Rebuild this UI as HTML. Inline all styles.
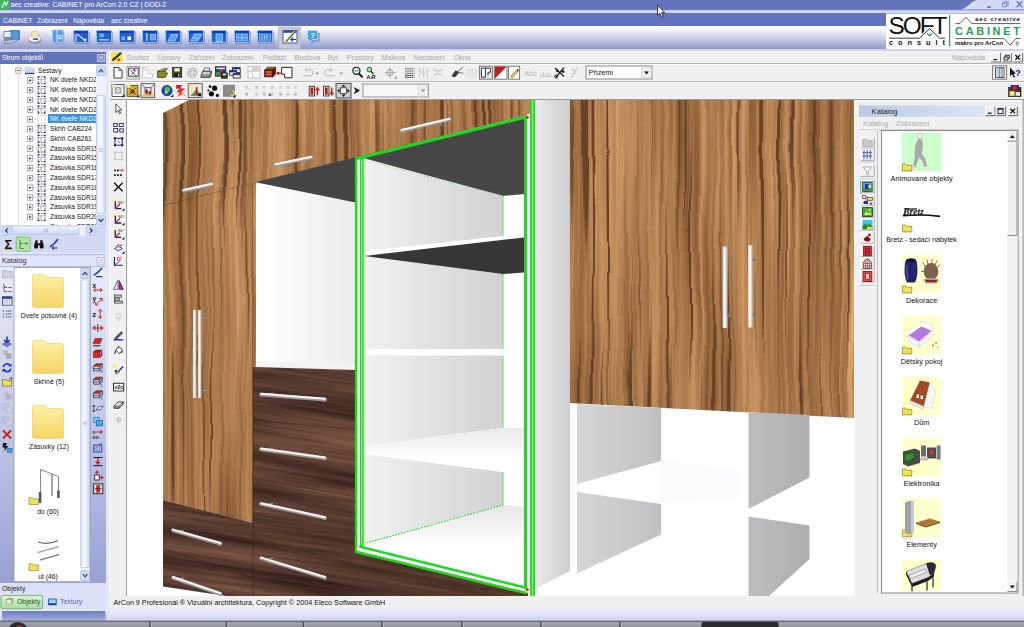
<!DOCTYPE html>
<html lang="cs">
<head>
<meta charset="utf-8">
<title>aec creative: CABINET pro ArCon 2.0 CZ | DOD-2</title>
<style>
html,body{margin:0;padding:0;}
body{width:1024px;height:627px;overflow:hidden;position:relative;background:#f0f0f0;
 font-family:"Liberation Sans",sans-serif;font-size:7.1px;color:#111;}
.a{position:absolute;}
.t{position:absolute;white-space:nowrap;line-height:10px;}
svg{position:absolute;left:0;top:0;overflow:visible;}
#titlebar{left:0;top:0;width:1024px;height:10px;background:#6374bb;}
#stripe1{left:0;top:10px;width:1024px;height:3px;background:#d5daf0;}
#menubar{left:0;top:13px;width:1024px;height:13px;background:#6374bb;}
#bigtool{left:0;top:26px;width:1024px;height:23px;background:linear-gradient(#ffffff 0%,#f4f5fb 15%,#c9cde8 55%,#8f98cd 100%);}
#stripe2{left:0;top:49px;width:1024px;height:3px;background:#cfd5ee;}
#leftpane{left:0;top:52px;width:107px;height:557px;background:#d3d9f2;}
#treehead{left:0;top:52px;width:106px;height:12px;background:#6374bb;}
#tree{left:1px;top:64px;width:95px;height:161px;background:#fff;overflow:hidden;}
.row{position:absolute;left:0;height:10px;white-space:nowrap;line-height:10px;}
#mainwin{left:109px;top:51px;width:915px;height:558px;background:#f0f0f0;}
.hl{position:absolute;background:#a0a0a0;height:1px;}
.menu2 span{position:absolute;top:0;color:#a9a9a9;font-size:9.3px;line-height:12px;}
#status{left:109px;top:596px;width:915px;height:13px;background:#f0f0f0;}
#bottombar{left:0;top:609px;width:1024px;height:12px;background:linear-gradient(#e9ecf8,#cfd5ee);}
#taskbar{left:0;top:621px;width:1024px;height:6px;background:#5a5e66;}
</style>
</head>
<body>
<!-- ===== application title bar ===== -->
<div id="titlebar" class="a"></div>
<div id="stripe1" class="a"></div>
<div id="menubar" class="a"></div>
<div id="bigtool" class="a"></div>
<div id="stripe2" class="a"></div>
<div class="t" style="left:10.5px;top:0;color:#fff;font-size:7px;line-height:9.6px;">aec creative: CABINET pro ArCon 2.0 CZ | DOD-2</div>
<div id="appmenu" class="a" style="left:0;top:14.8px;height:12px;color:#fff;font-size:6.8px;line-height:12px;white-space:nowrap;">
<span class="a" style="left:3px">CABINET</span><span class="a" style="left:37px">Zobrazení</span><span class="a" style="left:73px">Nápověda</span><span class="a" style="left:111px">aec creative</span></div>

<!-- ===== left pane ===== -->
<div id="leftpane" class="a"></div>
<div id="treehead" class="a"></div>
<div class="t" style="left:2px;top:53px;color:#fff;font-size:6.7px;">Strom objektů</div>

<!-- ===== main window ===== -->
<div id="mainwin" class="a"></div>
<div id="bottombar" class="a"></div>
<div id="taskbar" class="a"></div>

<!-- SCENE -->
<svg id="scene" style="left:127px;top:100px" width="728" height="496" viewBox="127 100 728 496">
<defs>
 <filter id="fwL" x="97" y="70" width="788" height="556" filterUnits="userSpaceOnUse" color-interpolation-filters="sRGB">
  <feTurbulence type="fractalNoise" baseFrequency="0.03 0.0025" numOctaves="2" seed="7" result="a"/>
  <feTurbulence type="fractalNoise" baseFrequency="0.2 0.004" numOctaves="2" seed="12" result="b"/>
  <feComposite in="a" in2="b" operator="arithmetic" k1="0" k2="0.5" k3="0.5" k4="0" result="c"/>
  <feColorMatrix in="c" type="matrix" values="0.66 0 0 0 0.335  0.58 0 0 0 0.185  0.46 0 0 0 0.07  0 0 0 0 1" result="base"/>
  <feTurbulence type="fractalNoise" baseFrequency="0.26 0.0035" numOctaves="1" seed="31" result="l"/>
  <feColorMatrix in="l" type="matrix" values="0 0 0 0 0.40  0 0 0 0 0.26  0 0 0 0 0.15  -9 0 0 0 3.75" result="lines"/>
  <feMerge result="grain"><feMergeNode in="base"/><feMergeNode in="lines"/></feMerge>
  <feTurbulence type="fractalNoise" baseFrequency="0.009 0.011" numOctaves="2" seed="5" result="w"/>
  <feDisplacementMap in="grain" in2="w" scale="7" xChannelSelector="R" yChannelSelector="G"/>
 </filter>
 <filter id="fwD" x="127" y="300" width="420" height="300" filterUnits="userSpaceOnUse" color-interpolation-filters="sRGB">
  <feTurbulence type="fractalNoise" baseFrequency="0.004 0.06" numOctaves="3" seed="3" result="a"/>
  <feTurbulence type="fractalNoise" baseFrequency="0.01 0.3" numOctaves="2" seed="5" result="b"/>
  <feComposite in="a" in2="b" operator="arithmetic" k1="0" k2="0.65" k3="0.35" k4="0" result="c"/>
  <feColorMatrix in="c" type="matrix" values="0.56 0 0 0 0.062  0.40 0 0 0 0.03  0.33 0 0 0 0.02  0 0 0 0 1"/>
 </filter>
 <linearGradient id="gWall" x1="364" x2="503" y1="0" y2="0" gradientUnits="userSpaceOnUse"><stop offset="0" stop-color="#f1f1f1"/><stop offset="1" stop-color="#d2d2d3"/></linearGradient>
 <linearGradient id="gInt" x1="256" x2="355" y1="0" y2="0" gradientUnits="userSpaceOnUse"><stop offset="0" stop-color="#ffffff"/><stop offset="1" stop-color="#ececec"/></linearGradient>
 <linearGradient id="gStrip" x1="535" x2="570" y1="0" y2="0" gradientUnits="userSpaceOnUse"><stop offset="0" stop-color="#ebebeb"/><stop offset="1" stop-color="#cdcdce"/></linearGradient>
 <linearGradient id="gP1" x1="577" x2="661" y1="0" y2="0" gradientUnits="userSpaceOnUse"><stop offset="0" stop-color="#d6d6d8"/><stop offset="1" stop-color="#c0c0c2"/></linearGradient>
 <linearGradient id="gP3" x1="748" x2="810" y1="0" y2="0" gradientUnits="userSpaceOnUse"><stop offset="0" stop-color="#bdbdbf"/><stop offset="1" stop-color="#aeaeb0"/></linearGradient>
 <linearGradient id="gFloor" x1="0" x2="0" y1="505" y2="590" gradientUnits="userSpaceOnUse"><stop offset="0" stop-color="#e6e6e8"/><stop offset="0.5" stop-color="#ffffff"/></linearGradient>
 <linearGradient id="gSh3" x1="0" x2="0" y1="428" y2="473" gradientUnits="userSpaceOnUse"><stop offset="0" stop-color="#e9e9eb"/><stop offset="0.7" stop-color="#ffffff"/></linearGradient>
 <linearGradient id="gHv" x1="0" x2="1" y1="0" y2="0"><stop offset="0" stop-color="#c8c8c8"/><stop offset="0.4" stop-color="#ffffff"/><stop offset="1" stop-color="#b4b4b4"/></linearGradient>
 <linearGradient id="gHh" x1="0" x2="0" y1="0" y2="1"><stop offset="0" stop-color="#ffffff"/><stop offset="1" stop-color="#a8a8a8"/></linearGradient>
 <clipPath id="cpL"><path d="M163,113 L189,100 L530,100 L530,114 L163,205.5Z M163,205.5 L256,182.5 L256,524 L163,500Z M569,100 L854,100 L854,418 L569,403Z"/></clipPath>
 <clipPath id="cpD"><path d="M253,367 L357,370 L357,551 L528,593 L528,596 L253,596Z M163,500 L253,523 L253,596 L172,596 L163,590Z"/></clipPath>
</defs>
<rect x="127" y="100" width="728" height="496" fill="#fff"/>
<!-- light walnut fronts -->
<g clip-path="url(#cpL)"><rect x="97" y="70" width="788" height="556" filter="url(#fwL)"/></g>
<path d="M163,205.5 L527,115" stroke="#5b3c22" stroke-width="0.8" opacity=".7"/>
<path d="M252.5,184 V523" stroke="#7a522e" stroke-width="1" opacity=".6"/>
<path d="M741,100 V412" stroke="#7a522e" stroke-width="0.8" opacity=".5"/>
<!-- white carcass interior left of selection -->
<polygon points="256,183 355,202 355,370 256,367" fill="url(#gInt)"/>
<polygon points="256,361 355,364 355,370 256,367" fill="#f3f3f4"/>
<polygon points="255.5,182.2 355.5,157.3 355.5,202.5" fill="#454546"/>
<!-- dark walnut drawers -->
<g clip-path="url(#cpD)"><g transform="translate(253,0) skewY(8.5) translate(-253,0)"><rect x="127" y="300" width="420" height="300" filter="url(#fwD)"/></g></g>
<path d="M253,420 L357,430 M253,478 L357,497 M253,537 L357,565 M163,548 L253,578" stroke="#2a1a12" stroke-width="0.7" opacity=".55"/>
<path d="M253,367 V596" stroke="#2a1a12" stroke-width="0.8" opacity=".6"/>
<!-- selected carcass -->
<polygon points="364,159 524,119 524,588 364,546" fill="#fff"/>
<polygon points="363,158 525,117.5 525,194 503,196" fill="#474748"/>
<polygon points="364,160 503,196 503,236 364,251" fill="url(#gWall)"/>
<polygon points="364,256 503,274 503,349 364,349" fill="url(#gWall)"/>
<polygon points="364,355.5 503,355.5 503,428 364,446" fill="url(#gWall)"/>
<polygon points="364,454 503,472 503,504.5 364,542.5" fill="url(#gWall)"/>
<polygon points="364,256 524,237.5 524,272.5 503,274" fill="#373738"/>
<polygon points="364,446 503,428 524,428 524,473 503,472 364,454" fill="url(#gSh3)"/>
<polygon points="364,543 503,505 524,507 524,588 364,546" fill="url(#gFloor)"/>
<path d="M503,196 V236 M503,274 V349 M503,356 V428 M503,472 V505" stroke="#62e862" stroke-width="1"/>
<path d="M366,543 L503,505" stroke="#3ed63e" stroke-width="1.2" stroke-dasharray="2 1"/>
<path d="M366,160.5 L503,196" stroke="#7be87b" stroke-width="0.8" stroke-dasharray="2 1"/>
<!-- green selection frame -->
<g stroke="#1fd81f" fill="none">
 <path d="M356.2,157.5 V551" stroke-width="2.6"/>
 <path d="M361.8,157 V546" stroke-width="4"/>
 <path d="M356,158.8 L527,116.6" stroke-width="3.2"/>
 <path d="M525.5,117 V590" stroke-width="3"/>
 <path d="M532.5,100 V596" stroke-width="5"/>
 <path d="M358,546.2 L527,588" stroke-width="2.6"/>
 <path d="M355,551.5 L527,593.2" stroke-width="2.8"/>
</g>
<path d="M361.8,160 V545" stroke="#8cf58c" stroke-width="1.2"/>
<path d="M532.5,100 V596" stroke="#7df27d" stroke-width="1.5"/>
<path d="M528.5,118 V592" stroke="#fff" stroke-width="2.2"/>
<path d="M358.6,161 V549" stroke="#f4fff4" stroke-width="1.4"/>
<path d="M357,548.8 L527,590.6" stroke="#fff" stroke-width="2"/>
<circle cx="527.3" cy="117.3" r="1.6" fill="#e02a18"/>
<circle cx="527.3" cy="589.5" r="1.6" fill="#e02a18"/>
<!-- side panel right of selection -->
<polygon points="535,100 570,100 570,571 535,589" fill="url(#gStrip)"/>
<!-- open shelving under wall units -->
<polygon points="577,404 661,408 661,461 577,484" fill="url(#gP1)"/>
<polygon points="577,492 661,504 661,534.5 577,573.5" fill="url(#gP1)"/>
<polygon points="748.5,412 809.5,415 809.5,477.5 748.5,509" fill="url(#gP3)"/>
<polygon points="748.5,516.5 809.5,525.5 809.5,559 769,596 748.5,596" fill="url(#gP3)"/>
<polygon points="661,461 740,469 740,500 661,503" fill="#fbfbfe"/>
<!-- handles -->
<g>
 <rect x="722.6" y="246.5" width="4.8" height="81.5" rx="1" fill="url(#gHv)"/>
 <rect x="748" y="245" width="4.6" height="82.5" rx="1" fill="url(#gHv)"/>
 <g fill="#767a80"><circle cx="729" cy="261" r="1.6"/><circle cx="729" cy="315.5" r="1.6"/><circle cx="754" cy="259.5" r="1.6"/><circle cx="754" cy="315" r="1.6"/></g>
 <rect x="193" y="310" width="3.2" height="88" fill="url(#gHv)"/>
 <rect x="198" y="310" width="3.2" height="88" fill="url(#gHv)"/>
 <path d="M201,317.5 H207 M201,390.5 H207" stroke="#8f8f8f" stroke-width="1.6"/>
 <g stroke-linecap="round">
  <g stroke="#8b8b8b" stroke-width="1.6" stroke-linecap="butt">
   <path d="M190,190.6 l1.6,2.4 M206.5,187 l1.6,2.4 M283,164.6 l1.6,2.6 M304.5,160.2 l1.6,2.6 M411,129.8 l2,3 M440.5,123 l2,3"/>
   <path d="M268,394.4 l5,-1.2 M321.5,399 l3.4,2.6 M268,449.6 l5,-1.4 M321.5,457.6 l3.4,2.6 M268,504.6 l5,-1.6 M321.5,517 l3.4,2.6 M268,559.4 l5,-1.8 M321.5,576.6 l3.4,2.6 M179,531.6 l4.4,-1.4 M217.5,542.8 l3,2.6 M179,579.2 l4.4,-1.4 M217.5,592.6 l3,2.6"/>
  </g>
  <g stroke="#9a9a9a" stroke-width="3.6">
   <path d="M183.5,190.8 L212,184.6 M275.5,165 L311.5,157.6 M401.5,130.8 L449.5,119.6"/>
   <path d="M261,394.6 L325,399.6 M261,449.4 L325,458.2 M261,504 L325,518 M261,558.4 L325,577.8 M173,530.4 L220.5,543.8 M173,577.8 L220.5,594"/>
  </g>
  <g stroke="#f6f6f6" stroke-width="2">
   <path d="M183.5,190 L212,183.8 M275.5,164.2 L311.5,156.8 M401.5,130 L449.5,118.8"/>
   <path d="M261,393.8 L325,398.8 M261,448.6 L325,457.4 M261,503.2 L325,517.2 M261,557.6 L325,577 M173,529.6 L220.5,543 M173,577 L220.5,593.2"/>
  </g>
 </g>
</g>
</svg>
<!-- /SCENE -->
<!-- RIGHTCAT -->
<svg id="mainchrome" width="1024" height="627" viewBox="0 0 1024 627"><rect x="106" y="51" width="3" height="558" fill="#e3e7f6"/>
<rect x="109" y="63.2" width="915" height=".9" fill="#a6a6a6"/><rect x="109" y="64.1" width="915" height=".8" fill="#fff"/>
<rect x="109" y="81" width="915" height=".9" fill="#a6a6a6"/><rect x="109" y="81.9" width="915" height=".8" fill="#fff"/>
<rect x="109" y="99" width="915" height="1" fill="#9a9a9a"/>
<rect x="126" y="100" width="1" height="496" fill="#9a9a9a"/>
<rect x="109" y="51" width=".8" height="558" fill="#fafafa"/>
<rect x="111" y="52" width="11.5" height="10.4" fill="#f6e93a"/><path d="M112.5,60.5 C115,58 118,56 121,52.8" stroke="#1c2a8a" stroke-width="2" fill="none"/><path d="M113,57.5 l2.2,1.2 M118.8,58.4 l1,2.2 l-2.4,-.6z" stroke="#d22" stroke-width=".9" fill="#d22"/>
<text x="126.5" y="60.4" font-family="Liberation Sans,sans-serif" font-size="7.3" fill="#a9a9a9" textLength="22.9" lengthAdjust="spacingAndGlyphs">Soubor</text>
<text x="157.8" y="60.4" font-family="Liberation Sans,sans-serif" font-size="7.3" fill="#a9a9a9" textLength="22.7" lengthAdjust="spacingAndGlyphs">Úpravy</text>
<text x="189" y="60.4" font-family="Liberation Sans,sans-serif" font-size="7.3" fill="#a9a9a9" textLength="25.6" lengthAdjust="spacingAndGlyphs">Zařízení</text>
<text x="222" y="60.4" font-family="Liberation Sans,sans-serif" font-size="7.3" fill="#a9a9a9" textLength="32" lengthAdjust="spacingAndGlyphs">Zobrazení</text>
<text x="262.7" y="60.4" font-family="Liberation Sans,sans-serif" font-size="7.3" fill="#a9a9a9" textLength="23.5" lengthAdjust="spacingAndGlyphs">Podlaží</text>
<text x="294.5" y="60.4" font-family="Liberation Sans,sans-serif" font-size="7.3" fill="#a9a9a9" textLength="26" lengthAdjust="spacingAndGlyphs">Budova</text>
<text x="327.5" y="60.4" font-family="Liberation Sans,sans-serif" font-size="7.3" fill="#a9a9a9" textLength="10.5" lengthAdjust="spacingAndGlyphs">Byt</text>
<text x="346.5" y="60.4" font-family="Liberation Sans,sans-serif" font-size="7.3" fill="#a9a9a9" textLength="27.5" lengthAdjust="spacingAndGlyphs">Prostory</text>
<text x="381.5" y="60.4" font-family="Liberation Sans,sans-serif" font-size="7.3" fill="#a9a9a9" textLength="24" lengthAdjust="spacingAndGlyphs">Makros</text>
<text x="413.5" y="60.4" font-family="Liberation Sans,sans-serif" font-size="7.3" fill="#a9a9a9" textLength="32" lengthAdjust="spacingAndGlyphs">Nastavení</text>
<text x="454" y="60.4" font-family="Liberation Sans,sans-serif" font-size="7.3" fill="#a9a9a9" textLength="16.5" lengthAdjust="spacingAndGlyphs">Okna</text>
<text x="952" y="60.4" font-family="Liberation Sans,sans-serif" font-size="7.3" fill="#a9a9a9" textLength="33" lengthAdjust="spacingAndGlyphs">Nápověda</text>
<rect x="991" y="53" width="9.6" height="9" fill="#f0f0f0" stroke="#fff" stroke-width=".8"/><path d="M991,62 h9.6 v-9" stroke="#555" stroke-width=".9" fill="none"/>
<path d="M993.4,59.6 h3.6" stroke="#111" stroke-width="1.2"/>
<rect x="1002" y="53" width="9.6" height="9" fill="#f0f0f0" stroke="#fff" stroke-width=".8"/><path d="M1002,62 h9.6 v-9" stroke="#555" stroke-width=".9" fill="none"/>
<path d="M1004,57 h4 v3 h-4z M1005.4,56.6 v-1.4 h4 v3 h-1.2" stroke="#111" stroke-width=".9" fill="none"/>
<rect x="1013" y="53" width="9.6" height="9" fill="#f0f0f0" stroke="#fff" stroke-width=".8"/><path d="M1013,62 h9.6 v-9" stroke="#555" stroke-width=".9" fill="none"/>
<path d="M1015.4,55 l4.6,4.8 M1020,55 l-4.6,4.8" stroke="#111" stroke-width="1.3"/>
<g transform="translate(113.5,67)"><path d="M.5,.5 h5 l3,3 v7.5 h-8z" fill="#fff" stroke="#222" stroke-width=".9"/><path d="M5.5,.5 v3 h3" fill="none" stroke="#222" stroke-width=".7"/></g>
<g transform="translate(127,66.4)"><rect x="0" y="0" width="12.6" height="12.6" fill="#e4e4e4" stroke="#8a8a8a" stroke-width=".8"/><rect x="1.6" y="1.8" width="9.6" height="8" fill="#fff" stroke="#333" stroke-width=".8"/><path d="M2.5,3 l7.5,7.5 M4,9 l5,-5" stroke="#333" stroke-width=".8"/><rect x="5.6" y="2.2" width="3" height="2.4" fill="#c94fc9"/></g>
<g transform="translate(142,67)"><path d="M.5,.5 h3.5 v3 h3 v3.4 h3.5 v4 h-10z" fill="#fafafa" stroke="#c4c4c4" stroke-width=".9"/><path d="M1,1 l5,6.5" stroke="#c8c8c8" stroke-width=".7"/></g>
<g transform="translate(157,67.5)"><path d="M.5,3 h3 l1,-1.4 h4 v1.8 h-4" fill="#d8d06a" stroke="#4a4a10" stroke-width=".7"/><path d="M.5,10 v-6 h8.5 v1.6 h1.6 l-2.4,4.4z" fill="#8a8a2a" stroke="#33330a" stroke-width=".7"/><path d="M7,1.4 q2,-1.6 3,.4 m0,0 l.6,-1.4 m-.6,1.4 l-1.4,-.2" stroke="#222" stroke-width=".6" fill="none"/></g>
<g transform="translate(172.5,67.5)"><rect x="0" y="0" width="9.2" height="9.6" fill="#4a4a1a" stroke="#1a1a08" stroke-width=".7"/><rect x="1.8" y=".6" width="5.4" height="3.4" fill="#e8e8e8"/><rect x="2.2" y="6" width="4.8" height="3.4" fill="#111"/><rect x="5.4" y="6.6" width="1.2" height="2.2" fill="#ddd"/></g>
<text x="186.6" y="76.4" font-family="Liberation Sans,sans-serif" font-size="11.5" fill="#9d9d9d">@</text>
<g transform="translate(200.6,67.4)"><path d="M2.4,3.8 l1.6,-3.2 h5.4 l-1,3.2z" fill="#fff" stroke="#333" stroke-width=".7"/><path d="M.4,7.8 l1.8,-4 h8.6 l-1.6,4z" fill="#c9c9c9" stroke="#222" stroke-width=".8"/><path d="M.4,7.8 v2.2 h8.8 v-2.2 M9.2,10 l1.6,-3.8 v-2.4" fill="#999" stroke="#222" stroke-width=".8"/></g>
<g transform="translate(215.4,66.8)"><rect x="0" y="0" width="10.4" height="9.4" fill="#1f2fa8" stroke="#111" stroke-width=".7"/><rect x=".6" y="5" width="5" height="4" fill="#2f9a3a"/><rect x="4.6" y="1" width="2.6" height="6.6" fill="#d22"/><rect x="1" y=".8" width="8.6" height="1.6" fill="#e8e8ff"/><rect x="6" y="6" width="6" height="5.6" fill="#3a3a1a" stroke="#111" stroke-width=".5"/><rect x="7.4" y="6.6" width="3" height="2" fill="#e8e8e8"/></g>
<g transform="translate(229.6,67.6)"><rect x="3" y="0" width="7.6" height="5" fill="#fff" stroke="#111" stroke-width=".8"/><rect x="3.2" y=".2" width="7.2" height="1.6" fill="#1f2fa8"/><rect x="0" y="3" width="7" height="4.6" fill="#fff" stroke="#111" stroke-width=".8"/><rect x=".2" y="3.2" width="6.6" height="1.6" fill="#1f2fa8"/><rect x="3.6" y="6" width="7" height="4.4" fill="#fff" stroke="#111" stroke-width=".8"/><rect x="3.8" y="6.2" width="6.6" height="1.4" fill="#1f2fa8"/></g>
<g transform="translate(248,66.6)"><rect x="0" y="0" width="12" height="11.6" fill="#fbfbfb" stroke="#bdbdbd" stroke-width=".9"/><path d="M0,4.6 h12 M4.6,0 v11.6" stroke="#c4c4c4" stroke-width=".9"/><rect x="5" y=".6" width="6.4" height="3.6" fill="#cfcfcf"/></g>
<g transform="translate(264,66.6)"><path d="M.6,3.4 l3,-2.8 h8 l-2.6,2.8z" fill="#8a6a1a" stroke="#2a1a08" stroke-width=".6"/><path d="M.6,3.4 h8.4 v6.8 h-8.4z" fill="#a01818" stroke="#2a0808" stroke-width=".7"/><path d="M9,3.4 l2.6,-2.8 v6.6 l-2.6,3z" fill="#6a0f0f" stroke="#2a0808" stroke-width=".6"/><path d="M2,5.4 h5.6 M2,7.8 h5.6" stroke="#e8c83a" stroke-width=".9"/></g>
<circle cx="278.2" cy="73.2" r="1.5" fill="#d61a1a"/><path d="M276.6,73.2 h4.4" stroke="#d61a1a" stroke-width="1"/>
<g transform="translate(281,66.8)"><path d="M.6,.6 h10.4 v10.4 h-7.4 v-3.6 h-3z" fill="#fff" stroke="#111" stroke-width=".9"/></g>
<path d="M303,75.8 h7.2 a3,3 0 0 0 0,-6 h-4.6 m1.8,-1.8 l-2.2,1.8 l2.2,1.8" stroke="#b9b9b9" stroke-width="1" fill="none"/><path d="M315.4,72.4 h3.6 l-1.8,2.2z" fill="#8a8a8a"/>
<path d="M334.6,75.8 h-7.2 a3,3 0 0 1 0,-6 h4.6 m-1.8,-1.8 l2.2,1.8 l-2.2,1.8" stroke="#b9b9b9" stroke-width="1" fill="none"/><path d="M339.4,72.4 h3.6 l-1.8,2.2z" fill="#8a8a8a"/>
<circle cx="356.4" cy="70.8" r="3.6" fill="#d8f0d8" stroke="#111" stroke-width="1.1"/><path d="M354.6,70.8 h3.6" stroke="#2a8a2a" stroke-width=".9"/><path d="M359,73.6 l3.6,3.8" stroke="#111" stroke-width="2"/>
<circle cx="369.4" cy="69.6" r="2.4" fill="#8ee08e" stroke="#1a5a1a" stroke-width=".9"/><path d="M371,71.4 l2.4,2.4" stroke="#111" stroke-width="1.3"/><text x="366.4" y="79.4" font-family="Liberation Sans,sans-serif" font-size="5.2" font-weight="bold" fill="#111">A›R</text>
<circle cx="390" cy="72.6" r="3" fill="none" stroke="#9a9a9a" stroke-width=".9"/><path d="M384.4,72.6 h11.2 M390,67 v11.2" stroke="#9a9a9a" stroke-width=".8"/><path d="M396.6,78.4 v-2.6 l-2.6,2.6z" fill="#7a7a7a"/>
<path d="M405,68.8 h9.4 M405,71 h9.4 M405,73.2 h9.4 M405,75.4 h9.4 M405,77.4 h9.4" stroke="#4a4a4a" stroke-width="1.1" stroke-dasharray="1.6 .6"/>
<path d="M419.4,67.6 v10.4 M427.4,67.6 v10.4 M419.4,70 l4,4.4 l4,-4.4 M423.4,68 v9" stroke="#c6c6c6" stroke-width=".9" fill="none"/>
<path d="M433,68 l10,9 M433,77 l10,-9 M434,70.6 h8 M434,74.6 h8" stroke="#bdbdbd" stroke-width="1" stroke-dasharray="1.6 .8" fill="none"/>
<path d="M451.4,76 l4,-5.6 l4.4,1.6 l-5,5.4z" fill="#3a3a3a"/><path d="M458,71 l5,-3.6 M458,72.4 l5.4,.8" stroke="#555" stroke-width=".8"/>
<path d="M466.4,69 h10.6 M466.4,71 h10.6 M466.4,73 h10.6 M466.4,75 h10.6 M466.4,77 h10.6" stroke="#c9c9c9" stroke-width=".9" stroke-dasharray=".8 .6"/>
<g transform="translate(479.4,66.2)"><rect x="0" y="0" width="13" height="13" fill="#e2e2e2" stroke="#6a6a6a" stroke-width=".9"/><path d="M2,2 h4 v9 h-4z M6,2 h5 v4 h-2.4 v3" fill="#fff" stroke="#222" stroke-width=".9"/></g>
<g transform="translate(494.4,66.2)"><rect x="0" y="0" width="12.6" height="13" fill="#fff" stroke="#6a6a6a" stroke-width=".9"/><path d="M.6,12.4 v-11.8 h11.4z" fill="#c41a1a"/><path d="M3,12 l9,-9" stroke="#fff" stroke-width="1"/></g>
<g transform="translate(508.6,66.2)"><rect x="0" y="0" width="11" height="13" fill="#fff" stroke="#6a6a6a" stroke-width=".9"/><path d="M2,10.4 l5.6,-6.2 l1.6,1.4 l-5.6,6.2z" fill="#e8c83a" stroke="#5a4a10" stroke-width=".5"/><path d="M7.6,4.2 l1.4,-1.6 l1.6,1.4 l-1.4,1.6z" fill="#d22"/></g>
<text x="524.6" y="76" font-family="Liberation Sans,sans-serif" font-size="7" fill="#b4b4b4">Abc</text>
<path d="M540,76.4 h11 M541,76.4 v-3 M543.4,76.4 v-4.4 M546,76.4 v-3 M548.4,76.4 v-4.4 M550.6,76.4 v-3" stroke="#c2c2c2" stroke-width=".8"/>
<path d="M555,68 l9,8.6 M564,67.6 l-8,9.6" stroke="#111" stroke-width="1.3"/><circle cx="556.2" cy="76.6" r="1.5" fill="none" stroke="#111" stroke-width=".9"/><circle cx="563" cy="71.6" r="1.3" fill="#111"/><circle cx="557.4" cy="71" r="1.2" fill="#111"/>
<path d="M577.4,67.4 l-6,10.6 M572,68 l3,6" stroke="#b9b9b9" stroke-width="1"/>
<rect x="586" y="66" width="66" height="13" fill="#fff" stroke="#7f7f7f" stroke-width=".9"/><rect x="641.6" y="67" width="9.6" height="11" fill="#efefef" stroke="#c9c9c9" stroke-width=".6"/><path d="M644,71.6 h5 l-2.5,3z" fill="#111"/>
<text x="588.6" y="75.4" font-family="Liberation Sans,sans-serif" font-size="7.2" fill="#111">Přízemí</text>
<g transform="translate(992.6,65.8)"><rect x="0" y="0" width="14" height="13.4" fill="#f6f6f6" stroke="#6a6a6a" stroke-width=".9"/><rect x="3" y="2" width="8.4" height="9.6" fill="#fff" stroke="#222" stroke-width=".8"/><path d="M7.2,2 v9.6 M9.4,2 v9.6" stroke="#222" stroke-width=".7"/><rect x="3.8" y="3" width="2.6" height="7.6" fill="#9fd6e6"/></g>
<path d="M1010,67.4 v8.6 l2,-1.8 l1.6,3.4 l1.4,-.6 l-1.6,-3.2 h2.6z" fill="#111"/><text x="1015" y="76" font-family="Liberation Sans,sans-serif" font-size="9.5" font-weight="bold" fill="#1a1a7a">?</text>
<g transform="translate(112,84.4)"><rect x="0" y="0" width="12" height="12" fill="#fbfbfb" stroke="#333" stroke-width=".8"/><path d="M2,10 l8,-8 M2,2 l8,8" stroke="#7a7a7a" stroke-width=".7"/><circle cx="6" cy="6" r="3" fill="none" stroke="#555" stroke-width=".7"/><rect x="0" y="0" width="3" height="3" fill="#f3ea8a"/><path d="M12.6,12.6 v-2.8 l-2.8,2.8z" fill="#111"/></g>
<g transform="translate(127,84.4)"><rect x="0" y="1" width="11" height="11" fill="#c9b62a" stroke="#333" stroke-width=".7"/><path d="M2,10.4 l7,-7 M2,3.4 l7,7" stroke="#333" stroke-width=".8"/><circle cx="5.5" cy="7" r="2" fill="#a01010"/><rect x="0" y="0" width="3.4" height="3.4" fill="#f7ee6a"/><path d="M12.4,12.8 v-2.8 l-2.8,2.8z" fill="#111"/></g>
<g transform="translate(141,83.6)"><rect x="0" y="0" width="13.6" height="14" fill="#e9e9e9" stroke="#555" stroke-width=".9"/><path d="M1,1 l3,3 h6 l3,-3 M4,4 v6 M10,4 v6" stroke="#333" stroke-width=".7" fill="none"/><rect x="4.4" y="6" width="2.4" height="5" fill="#b01818"/><rect x="7.6" y="7.6" width="2.4" height="3.6" fill="#b01818"/><rect x="1.6" y="11" width="10.6" height="2" fill="#d2c24a"/></g>
<g transform="translate(161.6,84.6)"><circle cx="5.4" cy="6" r="5.2" fill="#1f3fc8" stroke="#0a1a5a" stroke-width=".6"/><path d="M3,4 q2,-3 5,-1 q1.6,2.4 -1,4.4 q-3,1 -4,-1.4z" fill="#3fc84a"/><circle cx="4.6" cy="7.8" r="1.3" fill="#e8e83a"/><path d="M11.8,12.4 v-2.8 l-2.8,2.8z" fill="#111"/></g>
<g transform="translate(175,84.4)"><path d="M1,.6 h6.4 l-2.4,3.6 h5 l-4.6,4 h3.6 l-6.6,4.4 l2.6,-4.6 h-3.4 l3,-3.6 h-3.4z" fill="#e01a1a"/><path d="M7,9 l3.6,2.6" stroke="#f3c23a" stroke-width="1.4"/></g>
<g transform="translate(188.2,83.6)"><rect x="0" y="0" width="14" height="14" fill="#ece8d8" stroke="#555" stroke-width=".9"/><rect x=".6" y=".6" width="4" height="4" fill="#f7ee7a"/><path d="M2,12.4 l6.4,-7 l4.4,7z" fill="#7a8a5a"/><rect x="7.6" y="3.6" width="1.6" height="7" fill="#b01818"/><path d="M9.6,9.6 h3.4 v3 h-3.4z" fill="#222"/></g>
<g fill="#111"><circle cx="210" cy="86.6" r="1.4"/><circle cx="214.6" cy="88.2" r="2.6"/><circle cx="211.4" cy="93.8" r="2.6"/><circle cx="217.4" cy="95.4" r="1.6"/><circle cx="208.4" cy="90.4" r="1"/></g>
<g transform="translate(223,84.8)"><rect x="0" y="0" width="12" height="12" fill="#8a8a86"/><path d="M7.6,9.8 a2,2.6 0 1 0 1.8,-4" stroke="#e8d83a" stroke-width="1.2" fill="none"/><path d="M12.6,12.6 v-2.8 l-2.8,2.8z" fill="#111"/></g>
<rect x="245.3" y="86" width="2.6" height="2.8" fill="#b4b4b4" opacity="0.5"/><rect x="245.3" y="92.8" width="2.6" height="2.8" fill="#a8a8a8" opacity="0.8"/>
<rect x="255.3" y="86" width="2.6" height="2.8" fill="#b4b4b4" opacity="0.75"/><rect x="255.3" y="92.8" width="2.6" height="2.8" fill="#a8a8a8" opacity="0.5"/>
<rect x="262.90000000000003" y="86" width="2.6" height="2.8" fill="#b4b4b4" opacity="0.5"/><rect x="262.90000000000003" y="92.8" width="2.6" height="2.8" fill="#a8a8a8" opacity="0.8"/>
<rect x="270.90000000000003" y="86" width="2.6" height="2.8" fill="#b4b4b4" opacity="0.75"/><rect x="270.90000000000003" y="92.8" width="2.6" height="2.8" fill="#a8a8a8" opacity="0.5"/>
<rect x="279.3" y="86" width="2.6" height="2.8" fill="#b4b4b4" opacity="0.5"/><rect x="279.3" y="92.8" width="2.6" height="2.8" fill="#a8a8a8" opacity="0.8"/>
<rect x="286.7" y="86" width="2.6" height="2.8" fill="#b4b4b4" opacity="0.75"/><rect x="286.7" y="92.8" width="2.6" height="2.8" fill="#a8a8a8" opacity="0.5"/>
<rect x="294.3" y="86" width="2.6" height="2.8" fill="#b4b4b4" opacity="0.5"/><rect x="294.3" y="92.8" width="2.6" height="2.8" fill="#a8a8a8" opacity="0.8"/>
<path d="M246,85.6 v5 M249,88 l1.4,2.4" stroke="#c4c4c4" stroke-width=".8"/><path d="M271.4,95.6 h-3 l1.5,-2.4z" fill="#222"/>
<g transform="translate(308.6,84.6)"><rect x=".6" y="1.6" width="5.4" height="9.8" fill="#e8d8b8" stroke="#222" stroke-width=".8"/><rect x="2" y="3" width="2.6" height="7" fill="#b01818"/><path d="M8.8,10.6 v-7 m-1.8,2 l1.8,-2.2 l1.8,2.2" stroke="#d61a1a" stroke-width="1.5" fill="none"/></g>
<g transform="translate(323,84.6)"><rect x=".6" y="1.6" width="5.4" height="9.8" fill="#e8d8b8" stroke="#222" stroke-width=".8"/><rect x="2" y="3" width="2.6" height="7" fill="#b01818"/><path d="M8.8,3 v7 m-1.8,-2 l1.8,2.2 l1.8,-2.2" stroke="#d61a1a" stroke-width="1.5" fill="none"/></g>
<g transform="translate(336,83.4)"><rect x="0" y="0" width="15" height="14.6" fill="#cfcfcf" stroke="#4a4a4a" stroke-width="1"/><rect x="4.6" y="4.4" width="5.8" height="5.8" fill="#f2f2f2" stroke="#222" stroke-width=".7"/><path d="M7.5,1 l2,2.4 h-4z M7.5,13.6 l2,-2.4 h-4z M1.2,7.3 l2.4,-2 v4z M13.8,7.3 l-2.4,-2 v4z" fill="#111"/></g>
<path d="M353.6,87 l6.4,3.6 l-6.4,3.6 l2,-3.6z" fill="#111"/>
<rect x="363" y="84" width="65.6" height="13" fill="#f6f6f6" stroke="#8a8a8a" stroke-width=".9"/><rect x="418.6" y="85" width="9.2" height="11" fill="#efefef" stroke="#cfcfcf" stroke-width=".6"/><path d="M420.8,89.4 h4.8 l-2.4,2.8z" fill="#9a9a9a"/>
<g transform="translate(1008.6,84.6)"><rect x="0" y="3" width="12.4" height="9" fill="#3a3a1a" stroke="#111" stroke-width=".6"/><rect x="1" y="6.6" width="5" height="4.6" fill="#f3e87a"/><rect x="7" y="7.4" width="4.4" height="3.8" fill="#e8e8e8"/><rect x="2" y=".4" width="8.4" height="4.6" fill="#1f2fa8"/><circle cx="6" cy="3.4" r="2.4" fill="#d61a2a"/></g>
<g transform="translate(112.4,102.6) translate(6,6) scale(.86) translate(-6,-6)"><path d="M3,0.5 v10 l2.4,-2.4 l1.8,3.8 l1.4,-.7 l-1.8,-3.6 h3.2z" fill="#fff" stroke="#111" stroke-width=".8"/></g>
<g transform="translate(112.4,121.7) translate(6,6) scale(.86) translate(-6,-6)"><rect x=".6" y="1" width="4" height="3.6" fill="#fff" stroke="#1a1a5a" stroke-width="1"/><rect x="7" y="1" width="4.6" height="3.6" fill="#fff" stroke="#1a1a5a" stroke-width="1"/><rect x=".6" y="7" width="4.6" height="4" fill="#fff" stroke="#1a1a5a" stroke-width="1"/><rect x="7.6" y="7.4" width="4" height="3.6" fill="#fff" stroke="#1a1a5a" stroke-width="1"/></g>
<g transform="translate(112.4,135.4) translate(6,6) scale(.86) translate(-6,-6)"><rect x="2" y="2.4" width="8.4" height="8" fill="none" stroke="#1a1a5a" stroke-width="1.1"/><g fill="#1a1a5a"><rect x=".8" y="1.2" width="2.4" height="2.4"/><rect x="9.2" y="1.2" width="2.4" height="2.4"/><rect x=".8" y="9.2" width="2.4" height="2.4"/><rect x="9.2" y="9.2" width="2.4" height="2.4"/></g><path d="M5,5 l3,3" stroke="#1a1a5a" stroke-width=".7"/></g>
<g transform="translate(112.4,149.6) translate(6,6) scale(.86) translate(-6,-6)"><rect x="2" y="2.4" width="8.4" height="8" fill="none" stroke="#c2c2c2" stroke-width="1"/><g fill="#c9c9c9"><rect x=".8" y="1.2" width="2.4" height="2.4"/><rect x="9.2" y="1.2" width="2.4" height="2.4"/><rect x=".8" y="9.2" width="2.4" height="2.4"/><rect x="9.2" y="9.2" width="2.4" height="2.4"/></g></g>
<g transform="translate(112.4,167.0) translate(6,6) scale(.86) translate(-6,-6)"><g fill="#111"><rect x="1" y="2" width="2" height="2"/><rect x="4.4" y="2" width="2" height="2"/><rect x="1" y="7.4" width="2" height="2"/><rect x="4.4" y="7.4" width="2" height="2"/><rect x="8" y="7.4" width="2" height="2"/></g><path d="M7,2.8 h4.6 m-1.6,-1.6 l1.6,1.6 l-1.6,1.6" stroke="#d61a1a" stroke-width="1" fill="none"/></g>
<g transform="translate(112.4,181.0) translate(6,6) scale(.86) translate(-6,-6)"><path d="M1,1 l10,10 M11,1 l-10,10" stroke="#111" stroke-width="1.5"/></g>
<g transform="translate(112.4,198.8) translate(6,6) scale(.86) translate(-6,-6)"><rect x="0" y="0" width="4" height="4" fill="#f7ee7a"/><path d="M2.4,2 v8.4 h7" stroke="#1a1a7a" stroke-width="1.5" fill="none"/><path d="M2.4,10.4 l5.4,-5.4" stroke="#d61a1a" stroke-width="1.5"/><text x="5.6" y="4.6" font-family="Liberation Sans,sans-serif" font-size="4.6" fill="#111">90°</text><path d="M13,13 v-3 l-3,3z" fill="#111"/></g>
<g transform="translate(112.4,213.2) translate(6,6) scale(.86) translate(-6,-6)"><rect x="0" y="0" width="4" height="4" fill="#f7ee7a"/><path d="M2.4,2 v8.4 h7" stroke="#1a1a7a" stroke-width="1.5" fill="none"/><path d="M2.4,10.4 l5.4,-5.4" stroke="#d61a1a" stroke-width="1.5"/><text x="5.6" y="4.6" font-family="Liberation Sans,sans-serif" font-size="4.6" fill="#111">90°</text><path d="M13,13 v-3 l-3,3z" fill="#111"/></g>
<g transform="translate(112.4,227.6) translate(6,6) scale(.86) translate(-6,-6)"><rect x="0" y="0" width="4" height="4" fill="#f7ee7a"/><path d="M2.4,2 v8.4 h7" stroke="#1a1a7a" stroke-width="1.5" fill="none"/><path d="M2.4,10.4 l5.4,-5.4" stroke="#d61a1a" stroke-width="1.5"/><text x="5.6" y="4.6" font-family="Liberation Sans,sans-serif" font-size="4.6" fill="#111">90°</text><path d="M13,13 v-3 l-3,3z" fill="#111"/></g>
<g transform="translate(112.4,242.0) translate(6,6) scale(.86) translate(-6,-6)"><path d="M1.4,6.6 l4.6,-2.6 l4.8,2.6 l-4.8,2.6z" fill="none" stroke="#1a2a9a" stroke-width="1"/><path d="M3.4,3.4 q3,-2.6 6.4,0 m0,0 v-1.8 m0,1.8 h-1.8" stroke="#d61a1a" stroke-width=".9" fill="none"/><path d="M13,12.6 v-3 l-3,3z" fill="#111"/></g>
<g transform="translate(112.4,255.0) translate(6,6) scale(.86) translate(-6,-6)"><path d="M1.4,1.4 v9.6 h9.6" stroke="#1a1a7a" stroke-width="1.3" fill="none"/><path d="M1.6,10.6 l6,-4.4" stroke="#1a2a9a" stroke-width=".9"/><text x="4.4" y="5.6" font-family="Liberation Sans,sans-serif" font-size="6" font-weight="bold" fill="#d61a1a">0!</text></g>
<g transform="translate(112.4,278.7) translate(6,6) scale(.86) translate(-6,-6)"><path d="M5.4,1 v10.4 h-5z" fill="#fff" stroke="#333" stroke-width=".8"/><path d="M6.8,1 v10.4 h5z" fill="#b01ab0" stroke="#4a0a4a" stroke-width=".8"/></g>
<g transform="translate(112.4,293.0) translate(6,6) scale(.86) translate(-6,-6)"><path d="M1.6,.8 v10.4 M1.6,1.4 h8 v2.6 h-8 M1.6,5 h5.4 v2.4 h-5.4 M1.6,8.4 h9.4 v2.4 h-9.4" stroke="#333" stroke-width=".9" fill="#e6e6e6"/></g>
<g transform="translate(112.4,310.7) translate(6,6) scale(.86) translate(-6,-6)"><circle cx="6" cy="5" r="3.2" fill="#e9e9e9" stroke="#c4c4c4" stroke-width=".8"/><rect x="4.6" y="8" width="2.8" height="3" fill="#d2d2d2"/></g>
<g transform="translate(112.4,329.0) translate(6,6) scale(.86) translate(-6,-6)"><path d="M2.4,9 l7,-7 l1.6,1.6 l-7,7 l-2.4,.8z" fill="#5a5a5a" stroke="#111" stroke-width=".6"/><path d="M.6,11.6 h11" stroke="#1a2ad0" stroke-width="1.6"/></g>
<g transform="translate(112.4,345.0) translate(6,6) scale(.86) translate(-6,-6)"><path d="M3,4.4 l4,-3.4 l4,4.6 l-4,3.6z" fill="#fff" stroke="#111" stroke-width=".9"/><path d="M3,4.4 q-2.4,2.6 -1.4,5.6 q1.6,-.8 1.4,-5.6z" fill="#1a1a1a"/><path d="M5,2.8 q.4,-2.4 2.4,-1.4" stroke="#111" stroke-width=".7" fill="none"/><path d="M6.4,8.8 l4.6,-4 v3z" fill="#555"/></g>
<g transform="translate(112.4,363.4) translate(6,6) scale(.86) translate(-6,-6)"><rect x="0" y="0" width="4.4" height="4.4" fill="#f7ee7a"/><path d="M2,10.6 l4,-3 l1.4,1.6 l-4.4,2.4z" fill="#c9a62a" stroke="#333" stroke-width=".5"/><path d="M6.4,8 l5,-5.4" stroke="#1a1a7a" stroke-width="1.5"/><circle cx="3" cy="8" r="1.3" fill="#111"/></g>
<g transform="translate(112.4,381.0) translate(6,6) scale(.86) translate(-6,-6)"><rect x=".4" y="1.6" width="11.8" height="9" fill="#fff" stroke="#111" stroke-width="1"/><text x="1.4" y="8.8" font-family="Liberation Sans,sans-serif" font-size="6.4" font-weight="bold" fill="#111" textLength="10" lengthAdjust="spacingAndGlyphs">o2c</text></g>
<g transform="translate(112.4,398.5) translate(6,6) scale(.86) translate(-6,-6)"><path d="M.8,8 l5,-5 h6 l-5,5z" fill="#e9e9e9" stroke="#111" stroke-width=".9"/><path d="M.8,8 v2.4 h6 v-2.4 M6.8,10.4 l5,-5 v-2.4" fill="#999" stroke="#111" stroke-width=".8"/></g>
<g transform="translate(112.4,413.0) translate(6,6) scale(.86) translate(-6,-6)"><rect x="1" y="1" width="10.6" height="10.6" fill="#f9f9f9" stroke="#dcdcdc" stroke-width=".7"/><path d="M3.6,5 l2.6,-1.4 l2.8,1.4 v3.4 l-2.8,1.4 l-2.6,-1.4z M3.6,5 l2.6,1.4 l2.8,-1.4 M6.2,6.4 v3.4" fill="#e2e2e2" stroke="#9a9a9a" stroke-width=".6"/></g></svg>
<svg id="rightcat" width="1024" height="627" viewBox="0 0 1024 627"><defs><linearGradient id="gCatTitle" x1="0" x2="1" y1="0" y2="0"><stop offset="0" stop-color="#b9c9e2"/><stop offset=".6" stop-color="#d2e0f0"/><stop offset="1" stop-color="#e2ebf6"/></linearGradient></defs><rect x="854.6" y="100.6" width="168" height="496" fill="#f0f0f0" stroke="#fdfdfd" stroke-width=".8"/>
<rect x="1022.6" y="100" width="1" height="497" fill="#8f8f8f"/><rect x="854" y="596.2" width="168.4" height=".9" fill="#8f8f8f"/>
<rect x="859" y="105.4" width="159.4" height="11.4" fill="url(#gCatTitle)"/>
<text x="871.6" y="114" font-family="Liberation Sans,sans-serif" font-size="7.6" fill="#222">Katalog</text>
<rect x="985.6" y="106.6" width="9.4" height="9" fill="#f0f0f0" stroke="#fff" stroke-width=".8"/><path d="M985.6,115.6 h9.4 v-9" stroke="#555" stroke-width=".9" fill="none"/>
<path d="M987.8000000000001,113.2 h3.8" stroke="#111" stroke-width="1.3"/>
<rect x="996" y="106.6" width="9.4" height="9" fill="#f0f0f0" stroke="#fff" stroke-width=".8"/><path d="M996,115.6 h9.4 v-9" stroke="#555" stroke-width=".9" fill="none"/>
<rect x="998" y="108.6" width="5" height="5" fill="none" stroke="#111" stroke-width=".9"/><path d="M998,109 h5" stroke="#111" stroke-width="1.2"/>
<rect x="1008" y="106.6" width="9.4" height="9" fill="#f0f0f0" stroke="#fff" stroke-width=".8"/><path d="M1008,115.6 h9.4 v-9" stroke="#555" stroke-width=".9" fill="none"/>
<path d="M1010.4,108.8 l4.6,4.6 M1015,108.8 l-4.6,4.6" stroke="#111" stroke-width="1.3"/>
<text x="863" y="125.6" font-family="Liberation Sans,sans-serif" font-size="7.4" fill="#ababab">Katalog</text><text x="896" y="125.6" font-family="Liberation Sans,sans-serif" font-size="7.4" fill="#ababab">Zobrazení</text>
<rect x="859" y="129.6" width="160" height=".8" fill="#a8a8a8"/><rect x="859" y="130.4" width="20" height=".8" fill="#fff"/>
<rect x="877.4" y="131" width=".9" height="462" fill="#9a9a9a"/><rect x="878.3" y="131" width=".8" height="462" fill="#fff"/>
<rect x="881.6" y="130.6" width="136.4" height="462.4" fill="#fff" stroke="#7a7a7a" stroke-width=".9"/>
<rect x="1007" y="131.2" width="10.4" height="461.2" fill="#f2f2f2"/>
<rect x="1007.4" y="131.6" width="9.6" height="9.6" fill="#f0f0f0" stroke="#fff" stroke-width=".7"/><path d="M1007.4,141.2 h9.6 v-9.6" stroke="#666" stroke-width=".8" fill="none"/><path d="M1009.8,138 h5 l-2.5,-3z" fill="#111"/>
<rect x="1007.4" y="142.4" width="9.6" height="93" fill="#f0f0f0" stroke="#fff" stroke-width=".7"/><path d="M1007.4,235.4 h9.6 v-93" stroke="#666" stroke-width=".8" fill="none"/>
<rect x="1007.4" y="581.8" width="9.6" height="9.8" fill="#f0f0f0" stroke="#fff" stroke-width=".7"/><path d="M1007.4,591.6 h9.6 v-9.8" stroke="#666" stroke-width=".8" fill="none"/><path d="M1009.8,585.4 h5 l-2.5,3z" fill="#111"/>
<rect x="902" y="132.5" width="39" height="39" fill="#ccffcc"/>
<path d="M902.4,164.1 h3.4 l1,1.2 h5 v5.6 h-9.4z" fill="#f3e05a" stroke="#7a6a18" stroke-width=".6"/>
<text x="921.6" y="181.1" font-family="Liberation Sans,sans-serif" font-size="7.3" fill="#111" text-anchor="middle" textLength="62" lengthAdjust="spacingAndGlyphs">Animované objekty</text>
<rect x="902" y="193.5" width="39" height="39" fill="#ffffff"/>
<path d="M902.4,225.1 h3.4 l1,1.2 h5 v5.6 h-9.4z" fill="#f3e05a" stroke="#7a6a18" stroke-width=".6"/>
<text x="921.6" y="242.1" font-family="Liberation Sans,sans-serif" font-size="7.3" fill="#111" text-anchor="middle" textLength="70.5" lengthAdjust="spacingAndGlyphs">Bretz - sedací nábytek</text>
<rect x="902" y="254.5" width="39" height="39" fill="#ffffcc"/>
<path d="M902.4,286.09999999999997 h3.4 l1,1.2 h5 v5.6 h-9.4z" fill="#f3e05a" stroke="#7a6a18" stroke-width=".6"/>
<text x="921.6" y="303.1" font-family="Liberation Sans,sans-serif" font-size="7.3" fill="#111" text-anchor="middle">Dekorace</text>
<rect x="902" y="315.5" width="39" height="39" fill="#ffffcc"/>
<path d="M902.4,347.09999999999997 h3.4 l1,1.2 h5 v5.6 h-9.4z" fill="#f3e05a" stroke="#7a6a18" stroke-width=".6"/>
<text x="921.6" y="364.1" font-family="Liberation Sans,sans-serif" font-size="7.3" fill="#111" text-anchor="middle">Dětský pokoj</text>
<rect x="902" y="376.5" width="39" height="39" fill="#ffffcc"/>
<path d="M902.4,408.09999999999997 h3.4 l1,1.2 h5 v5.6 h-9.4z" fill="#f3e05a" stroke="#7a6a18" stroke-width=".6"/>
<text x="921.6" y="425.1" font-family="Liberation Sans,sans-serif" font-size="7.3" fill="#111" text-anchor="middle">Dům</text>
<rect x="902" y="437.5" width="39" height="39" fill="#ffffcc"/>
<path d="M902.4,469.09999999999997 h3.4 l1,1.2 h5 v5.6 h-9.4z" fill="#f3e05a" stroke="#7a6a18" stroke-width=".6"/>
<text x="921.6" y="486.1" font-family="Liberation Sans,sans-serif" font-size="7.3" fill="#111" text-anchor="middle">Elektronika</text>
<rect x="902" y="498.5" width="39" height="39" fill="#ffffcc"/>
<path d="M902.4,530.1 h3.4 l1,1.2 h5 v5.6 h-9.4z" fill="#f3e05a" stroke="#7a6a18" stroke-width=".6"/>
<text x="921.6" y="547.1" font-family="Liberation Sans,sans-serif" font-size="7.3" fill="#111" text-anchor="middle">Elementy</text>
<rect x="902" y="559.5" width="39" height="31" fill="#ffffcc"/>
<g transform="translate(902,132.5)"><ellipse cx="18" cy="3.4" rx="3" ry="2.6" fill="#f4f4f4" stroke="#aaa" stroke-width=".5"/><path d="M16.4,6 q-5,8 -3.4,18 l-2,10 h3 l3,-9 l3,3 l2,6 h3.4 l-2.4,-8 l-3.4,-5 q2.6,-8 -.4,-15z" fill="#a9a9a9"/><ellipse cx="25" cy="35.4" rx="3" ry="1.4" fill="#f2f2f2" stroke="#bbb" stroke-width=".4"/><ellipse cx="14" cy="36" rx="3" ry="1.4" fill="#f2f2f2" stroke="#bbb" stroke-width=".4"/></g>
<text x="903" y="214.6" font-family="Liberation Serif,serif" font-style="italic" font-weight="bold" font-size="9.6" fill="#111">Bretz</text><path d="M903,215.8 q18,-2 37,.6" stroke="#111" stroke-width="1.6" fill="none"/><path d="M905,209 h12" stroke="#111" stroke-width="1.2"/>
<g transform="translate(902,254.5)"><path d="M3,9 q0,-5 6,-5 q6,0 6,5 q1.6,12 -2,19 h-8 q-3.6,-7 -2,-19z" fill="#25256e"/><ellipse cx="9" cy="5.6" rx="4.6" ry="1.6" fill="#12123c"/><path d="M5,10 q-1,8 1,15" stroke="#5a5ab0" stroke-width="1.2" fill="none"/><ellipse cx="29" cy="17" rx="7.4" ry="8.4" fill="#7a6450"/><path d="M23,12 l-2,-4 M26,10 l-1,-5 M30,9.6 v-5 M33,10.4 l2,-4.6 M35.6,13 l3,-3 M22,17 h-3" stroke="#4a3a2a" stroke-width=".7"/><ellipse cx="29" cy="26.6" rx="8" ry="2.6" fill="#f2f2f2" stroke="#999" stroke-width=".5"/><path d="M22.4,25 h13.4 l-1.4,3 h-10.6z" fill="#8a2a2a"/></g>
<g transform="translate(902,315.5)"><path d="M5,20 l14,-10 l12,5 l-14,12z" fill="#b478e0" stroke="#fff" stroke-width="1.6"/><path d="M5,20 v5 l12,7 v-5z M17,27 l14,-12 v5 l-14,12z" fill="#f4f4f8" stroke="#c8c8d8" stroke-width=".5"/><path d="M19,10 v-5 l12,5 v5" fill="#fafafa" stroke="#d4d4e0" stroke-width=".6"/><circle cx="31" cy="30" r=".9" fill="#e33"/><circle cx="34" cy="27.4" r=".9" fill="#3a3"/><circle cx="35.6" cy="31.6" r=".9" fill="#e93"/></g>
<g transform="translate(902,376.5)"><path d="M8,24 l10,-20 l10,2 l-6,24z" fill="#a04a28"/><path d="M28,6 l6,8 l-4,18 l-8,-2z" fill="#f6f6f6" stroke="#ccc" stroke-width=".5"/><path d="M8,24 l14,6 l-.6,3 l-14,-6.4z" fill="#e8e8e8" stroke="#bbb" stroke-width=".4"/><rect x="14.6" y="18" width="2.4" height="3.6" fill="#fff"/><rect x="18.6" y="19" width="2.4" height="3.6" fill="#fff"/></g>
<g transform="translate(902,437.5)"><path d="M1,14 l12,-3 l5,2.4 v12 l-12,3.6 l-5,-2.6z" fill="#4a4a4e"/><path d="M2.4,15.6 l10,-2.6 v10 l-10,3z" fill="#2a5a2a"/><path d="M3.4,17 l8,-2 v6 l-8,2.4z" fill="#3a8a3a"/><rect x="19" y="8" width="5" height="11" fill="#6a6a72"/><rect x="25" y="10" width="9" height="11" fill="#4a4a52"/><rect x="34.6" y="8" width="4" height="14" fill="#7a7a84"/><circle cx="29.4" cy="15" r="2.4" fill="#c83a3a"/><rect x="18" y="20" width="8" height="3" fill="#b9b9c2"/></g>
<g transform="translate(902,498.5)"><path d="M3,4 l6,-2 l3,1 v31 l-6,2 l-3,-1.4z" fill="#9ea2aa"/><path d="M9,2 l3,1 v31 l-3,1z" fill="#c6cad2"/><path d="M14,24 l14,-4 l10,3 l-14,4.6z" fill="#b07a3c"/><path d="M14,24 l10,3.6 v1.4 l-10,-3.6z M24,27.6 l14,-4.6 v1.4 l-14,4.6z" fill="#7a5224"/></g>
<g transform="translate(902,559.5)"><path d="M4,12 l20,-8 q8,-3 10,2 l-2,8 l-6,4 l-16,6z" fill="#dcdce2" stroke="#555" stroke-width=".5"/><path d="M24,4 q8,-3 10,2 l-2,8 l-4,2z" fill="#2a2a2e"/><path d="M4,12 l6,12 l16,-6 l6,-4 v3 l-6,4.4 l-16,6 l-6,-12.4z" fill="#1a1a1e"/><path d="M7,16 l16,-6.4 l1.6,3 l-16,6.4z" fill="#fafafa" stroke="#333" stroke-width=".4"/><path d="M10,27 v5 M25,22 v9 M31,18 v10" stroke="#111" stroke-width="1.1"/></g>
<path d="M860.6,148.3 h13.6 v-11.4" stroke="#9a9a9a" stroke-width=".8" fill="none"/><path d="M860.6,148.3 v-11.4 h13.6" stroke="#fff" stroke-width=".8" fill="none"/><g transform="translate(862,137.5)"><path d="M.8,2 h3.4 l1,1.2 h5 v6 h-9.4z" fill="#c9c9c9" stroke="#a0a0a0" stroke-width=".7"/></g>
<path d="M860.6,160.4 h13.6 v-11.4" stroke="#9a9a9a" stroke-width=".8" fill="none"/><path d="M860.6,160.4 v-11.4 h13.6" stroke="#fff" stroke-width=".8" fill="none"/><g transform="translate(862,149.6)"><path d="M2,.8 v8.8 M5.2,.8 v8.8 M8.4,.8 v8.8 M.8,3 h9 M.8,6.4 h9" stroke="#1f2fb8" stroke-width="1" stroke-dasharray="1.4 .6"/></g>
<path d="M860.6,176.4 h13.6 v-11.4" stroke="#9a9a9a" stroke-width=".8" fill="none"/><path d="M860.6,176.4 v-11.4 h13.6" stroke="#fff" stroke-width=".8" fill="none"/><g transform="translate(862,165.6)"><path d="M1,1.4 h8.6 l-3.4,4 v4 l-1.8,-1.2 v-2.8z" fill="#fafafa" stroke="#9a9a9a" stroke-width=".8"/></g>
<rect x="860.6" y="181.4" width="13.6" height="11.4" fill="#f7f7f7" stroke="#8a8a8a" stroke-width=".8"/><g transform="translate(862,182)"><rect x=".6" y=".6" width="9.6" height="8.8" fill="#38b4e8" stroke="#1a3a1a" stroke-width=".8"/><rect x="1" y="6" width="9" height="3" fill="#3aa83a"/><rect x="3" y="2" width="4" height="5.4" fill="#1f2fb8"/><rect x="6.4" y="3" width="2.6" height="3" fill="#e8e83a"/></g>
<path d="M860.6,205.8 h13.6 v-11.4" stroke="#9a9a9a" stroke-width=".8" fill="none"/><path d="M860.6,205.8 v-11.4 h13.6" stroke="#fff" stroke-width=".8" fill="none"/><g transform="translate(862,195)"><rect x=".4" y=".6" width="3.4" height="2.8" fill="#fff" stroke="#c81a1a" stroke-width=".8"/><rect x="5.6" y="2.4" width="4.8" height="3" fill="#e8e83a" stroke="#333" stroke-width=".6"/><rect x="1.6" y="6" width="4.4" height="3" fill="#1f2fb8"/><path d="M3.8,2 h2 M4,6 v-2" stroke="#333" stroke-width=".6"/><rect x="7.6" y="7.6" width="2.6" height="2" fill="#b01ab0"/></g>
<path d="M860.6,217.8 h13.6 v-11.4" stroke="#9a9a9a" stroke-width=".8" fill="none"/><path d="M860.6,217.8 v-11.4 h13.6" stroke="#fff" stroke-width=".8" fill="none"/><g transform="translate(862,207)"><rect x=".6" y=".6" width="9.8" height="8.8" fill="#4aa83a" stroke="#1a3a1a" stroke-width=".8"/><path d="M1.6,8 l3,-4 l2,2.4 l1.6,-1.6 l1.6,3.2z" fill="#c8e86a"/><circle cx="7.6" cy="3" r="1.1" fill="#f7f7a0"/></g>
<path d="M860.6,230.20000000000002 h13.6 v-11.4" stroke="#9a9a9a" stroke-width=".8" fill="none"/><path d="M860.6,230.20000000000002 v-11.4 h13.6" stroke="#fff" stroke-width=".8" fill="none"/><g transform="translate(862,219.4)"><rect x=".6" y=".6" width="9.8" height="9.2" fill="#3ac8e8"/><path d="M.6,9.8 v-3 l2.4,-3 l2,2.4 l2.4,-1.8 l3,2.6 v2.8z" fill="#2a8a2a"/><rect x="5" y="7.4" width="5.4" height="2.4" fill="#e8d83a"/></g>
<path d="M860.6,243.20000000000002 h13.6 v-11.4" stroke="#9a9a9a" stroke-width=".8" fill="none"/><path d="M860.6,243.20000000000002 v-11.4 h13.6" stroke="#fff" stroke-width=".8" fill="none"/><g transform="translate(862,232.4)"><path d="M1.6,7 q2,-4 5,-2.4 q3,2 1,4 q-4,1.6 -6,-1.6z" fill="#8a1010"/><circle cx="7.6" cy="2.6" r="1.4" fill="#d61a1a"/><path d="M4,5 l3,-2.4" stroke="#222" stroke-width=".7"/></g>
<path d="M860.6,256.6 h13.6 v-11.4" stroke="#9a9a9a" stroke-width=".8" fill="none"/><path d="M860.6,256.6 v-11.4 h13.6" stroke="#fff" stroke-width=".8" fill="none"/><g transform="translate(862,245.8)"><rect x="1.4" y=".4" width="8" height="9.6" fill="#e03a3a" stroke="#6a0a0a" stroke-width=".7"/><path d="M3.6,.4 v9.6 M7.2,.4 v9.6 M3.6,3 h3.6 M3.6,5.4 h3.6 M3.6,7.8 h3.6" stroke="#6a0a0a" stroke-width=".7"/></g>
<path d="M860.6,269.2 h13.6 v-11.4" stroke="#9a9a9a" stroke-width=".8" fill="none"/><path d="M860.6,269.2 v-11.4 h13.6" stroke="#fff" stroke-width=".8" fill="none"/><g transform="translate(862,258.4)"><path d="M1.4,10 v-6 q4,-6.6 8,0 v6z" fill="#f2dada" stroke="#333" stroke-width=".8"/><path d="M5.4,.6 v9.4 M1.4,5 h8 M1.4,7.6 h8 M3.4,2.4 v7.6 M7.4,2.4 v7.6" stroke="#8a2a2a" stroke-width=".6"/></g>
<path d="M860.6,282.0 h13.6 v-11.4" stroke="#9a9a9a" stroke-width=".8" fill="none"/><path d="M860.6,282.0 v-11.4 h13.6" stroke="#fff" stroke-width=".8" fill="none"/><g transform="translate(862,271.2)"><rect x="1" y=".2" width="8.8" height="10" fill="#e84a4a" stroke="#7a0a0a" stroke-width=".8"/><rect x="3.6" y="2.4" width="3.6" height="5.6" fill="#f7d0d0" stroke="#7a0a0a" stroke-width=".6"/></g>
<rect x="859.6" y="285.4" width="16" height=".8" fill="#a8a8a8"/><rect x="859.6" y="286.2" width="16" height=".8" fill="#fff"/>
<rect x="859.6" y="161.6" width="16" height=".8" fill="#c8c8c8"/><rect x="859.6" y="178.6" width="16" height=".8" fill="#c8c8c8"/></svg>
<!-- /RIGHTCAT -->
<!-- LEFT -->
<div id="tree" class="a"><div class="row" style="left:37px;top:1.6px;font-size:6.6px;">Sestavy</div><div class="row" style="left:49px;top:11.4px;font-size:6.6px;">NK dveře NKD21</div><div class="row" style="left:49px;top:21.1px;font-size:6.6px;">NK dveře NKD22</div><div class="row" style="left:49px;top:30.9px;font-size:6.6px;">NK dveře NKD23</div><div class="row" style="left:49px;top:40.6px;font-size:6.6px;">NK dveře NKD24</div><div class="row" style="left:47px;top:50.0px;width:60px;height:9.4px;background:#3b8ee2;color:#fff;font-size:6.6px;padding-left:2px;line-height:9.6px;">NK dveře NKD25</div><div class="row" style="left:49px;top:60.2px;font-size:6.6px;">Skříň CAB224</div><div class="row" style="left:49px;top:69.9px;font-size:6.6px;">Skříň CAB261</div><div class="row" style="left:49px;top:79.7px;font-size:6.6px;">Zásuvka SDR15</div><div class="row" style="left:49px;top:89.4px;font-size:6.6px;">Zásuvka SDR15</div><div class="row" style="left:49px;top:99.2px;font-size:6.6px;">Zásuvka SDR16</div><div class="row" style="left:49px;top:109.0px;font-size:6.6px;">Zásuvka SDR17</div><div class="row" style="left:49px;top:118.7px;font-size:6.6px;">Zásuvka SDR18</div><div class="row" style="left:49px;top:128.5px;font-size:6.6px;">Zásuvka SDR18</div><div class="row" style="left:49px;top:138.2px;font-size:6.6px;">Zásuvka SDR19</div><div class="row" style="left:49px;top:148.0px;font-size:6.6px;">Zásuvka SDR20</div><div class="row" style="left:49px;top:157.8px;font-size:6.6px;">Zásuvka SDR21</div></div>
<svg id="leftsvg" width="1024" height="627" viewBox="0 0 1024 627"><defs>
<linearGradient id="gThumbV" x1="0" x2="1" y1="0" y2="0"><stop offset="0" stop-color="#dfe8fb"/><stop offset=".5" stop-color="#f6f9ff"/><stop offset="1" stop-color="#c7d5f3"/></linearGradient>
<linearGradient id="gThumbV2" x1="0" x2="1" y1="0" y2="0"><stop offset="0" stop-color="#dfe8fb"/><stop offset=".5" stop-color="#f6f9ff"/><stop offset="1" stop-color="#c7d5f3"/></linearGradient>
<linearGradient id="gThumbH" x1="0" x2="0" y1="0" y2="1"><stop offset="0" stop-color="#f2f6ff"/><stop offset="1" stop-color="#c3d2f2"/></linearGradient>
<linearGradient id="gStripL" x1="0" x2="0" y1="0" y2="1"><stop offset="0" stop-color="#e9ecf9"/><stop offset="1" stop-color="#98a2d5"/></linearGradient>
<linearGradient id="gFold" x1="0" x2="0" y1="0" y2="1"><stop offset="0" stop-color="#fdf0a6"/><stop offset="1" stop-color="#f5d564"/></linearGradient>
<linearGradient id="gBlueBox" x1="0" x2="0" y1="0" y2="1"><stop offset="0" stop-color="#6d7bc4"/><stop offset="1" stop-color="#a4aede"/></linearGradient>
<linearGradient id="gTask" x1="0" x2="0" y1="0" y2="1"><stop offset="0" stop-color="#6e727b"/><stop offset=".3" stop-color="#a3a7b0"/><stop offset="1" stop-color="#8d919a"/></linearGradient>
<linearGradient id="gTab" x1="0" x2="0" y1="0" y2="1"><stop offset="0" stop-color="#dcf6d8"/><stop offset="1" stop-color="#a6dfa0"/></linearGradient>
</defs><path d="M18.5,66 V226 M21,70.6 H25 M30,75 V226" stroke="#b4b4b4" stroke-width=".7" stroke-dasharray="1 1" fill="none"/>
<rect x="15.8" y="68" width="5.2" height="5.2" fill="#fff" stroke="#8a8a8a" stroke-width=".7"/><path d="M17,70.6 h2.8" stroke="#333" stroke-width=".8"/>
<path d="M25.2,67 h3.6 l1,1.1 h4.4 v5.6 h-9z" fill="#dfe7f3" stroke="#a9b6cc" stroke-width=".6"/><rect x="25.4" y="69.4" width="8.6" height="3.4" fill="#c5d5ea"/><rect x="25" y="72.8" width="9.4" height="1.3" fill="#3a4866"/>
<path d="M33,80.4 H37.4" stroke="#b4b4b4" stroke-width=".7" stroke-dasharray="1 1"/>
<rect x="27.3" y="77.7" width="5.4" height="5.4" fill="#fff" stroke="#8a8a8a" stroke-width=".7"/><path d="M28.6,80.4 h2.8 M30,79.0 v2.8" stroke="#333" stroke-width=".8"/>
<rect x="38.2" y="76.8" width="6.8" height="7" fill="#fff" stroke="#30304a" stroke-width=".8" stroke-dasharray="1.7 1"/><path d="M39,79.2 h5.4 M41,79.2 v4" stroke="#8c98cc" stroke-width=".8"/><g fill="#1a1a2a"><rect x="37.7" y="76.3" width="1.3" height="1.3"/><rect x="44.2" y="76.3" width="1.3" height="1.3"/><rect x="37.7" y="83.0" width="1.3" height="1.3"/><rect x="44.2" y="83.0" width="1.3" height="1.3"/></g>
<path d="M33,90.1 H37.4" stroke="#b4b4b4" stroke-width=".7" stroke-dasharray="1 1"/>
<rect x="27.3" y="87.4" width="5.4" height="5.4" fill="#fff" stroke="#8a8a8a" stroke-width=".7"/><path d="M28.6,90.1 h2.8 M30,88.7 v2.8" stroke="#333" stroke-width=".8"/>
<rect x="38.2" y="86.5" width="6.8" height="7" fill="#fff" stroke="#30304a" stroke-width=".8" stroke-dasharray="1.7 1"/><path d="M39,88.9 h5.4 M41,88.9 v4" stroke="#8c98cc" stroke-width=".8"/><g fill="#1a1a2a"><rect x="37.7" y="86.0" width="1.3" height="1.3"/><rect x="44.2" y="86.0" width="1.3" height="1.3"/><rect x="37.7" y="92.7" width="1.3" height="1.3"/><rect x="44.2" y="92.7" width="1.3" height="1.3"/></g>
<path d="M33,99.9 H37.4" stroke="#b4b4b4" stroke-width=".7" stroke-dasharray="1 1"/>
<rect x="27.3" y="97.2" width="5.4" height="5.4" fill="#fff" stroke="#8a8a8a" stroke-width=".7"/><path d="M28.6,99.9 h2.8 M30,98.5 v2.8" stroke="#333" stroke-width=".8"/>
<rect x="38.2" y="96.3" width="6.8" height="7" fill="#fff" stroke="#30304a" stroke-width=".8" stroke-dasharray="1.7 1"/><path d="M39,98.7 h5.4 M41,98.7 v4" stroke="#8c98cc" stroke-width=".8"/><g fill="#1a1a2a"><rect x="37.7" y="95.8" width="1.3" height="1.3"/><rect x="44.2" y="95.8" width="1.3" height="1.3"/><rect x="37.7" y="102.5" width="1.3" height="1.3"/><rect x="44.2" y="102.5" width="1.3" height="1.3"/></g>
<path d="M33,109.6 H37.4" stroke="#b4b4b4" stroke-width=".7" stroke-dasharray="1 1"/>
<rect x="27.3" y="106.9" width="5.4" height="5.4" fill="#fff" stroke="#8a8a8a" stroke-width=".7"/><path d="M28.6,109.6 h2.8 M30,108.2 v2.8" stroke="#333" stroke-width=".8"/>
<rect x="38.2" y="106.0" width="6.8" height="7" fill="#fff" stroke="#30304a" stroke-width=".8" stroke-dasharray="1.7 1"/><path d="M39,108.4 h5.4 M41,108.4 v4" stroke="#8c98cc" stroke-width=".8"/><g fill="#1a1a2a"><rect x="37.7" y="105.5" width="1.3" height="1.3"/><rect x="44.2" y="105.5" width="1.3" height="1.3"/><rect x="37.7" y="112.2" width="1.3" height="1.3"/><rect x="44.2" y="112.2" width="1.3" height="1.3"/></g>
<path d="M33,119.4 H37.4" stroke="#b4b4b4" stroke-width=".7" stroke-dasharray="1 1"/>
<rect x="27.3" y="116.7" width="5.4" height="5.4" fill="#fff" stroke="#8a8a8a" stroke-width=".7"/><path d="M28.6,119.4 h2.8 M30,118.0 v2.8" stroke="#333" stroke-width=".8"/>
<rect x="38" y="115.6" width="7.4" height="7.6" fill="#fff" stroke="#c8c8d0" stroke-width=".7"/>
<path d="M33,129.2 H37.4" stroke="#b4b4b4" stroke-width=".7" stroke-dasharray="1 1"/>
<rect x="27.3" y="126.5" width="5.4" height="5.4" fill="#fff" stroke="#8a8a8a" stroke-width=".7"/><path d="M28.6,129.2 h2.8 M30,127.8 v2.8" stroke="#333" stroke-width=".8"/>
<rect x="38.2" y="125.6" width="6.8" height="7" fill="#fff" stroke="#30304a" stroke-width=".8" stroke-dasharray="1.7 1"/><path d="M39,128.0 h5.4 M41,128.0 v4" stroke="#8c98cc" stroke-width=".8"/><g fill="#1a1a2a"><rect x="37.7" y="125.1" width="1.3" height="1.3"/><rect x="44.2" y="125.1" width="1.3" height="1.3"/><rect x="37.7" y="131.8" width="1.3" height="1.3"/><rect x="44.2" y="131.8" width="1.3" height="1.3"/></g>
<path d="M33,138.9 H37.4" stroke="#b4b4b4" stroke-width=".7" stroke-dasharray="1 1"/>
<rect x="27.3" y="136.2" width="5.4" height="5.4" fill="#fff" stroke="#8a8a8a" stroke-width=".7"/><path d="M28.6,138.9 h2.8 M30,137.5 v2.8" stroke="#333" stroke-width=".8"/>
<rect x="38.2" y="135.3" width="6.8" height="7" fill="#fff" stroke="#30304a" stroke-width=".8" stroke-dasharray="1.7 1"/><path d="M39,137.7 h5.4 M41,137.7 v4" stroke="#8c98cc" stroke-width=".8"/><g fill="#1a1a2a"><rect x="37.7" y="134.8" width="1.3" height="1.3"/><rect x="44.2" y="134.8" width="1.3" height="1.3"/><rect x="37.7" y="141.5" width="1.3" height="1.3"/><rect x="44.2" y="141.5" width="1.3" height="1.3"/></g>
<path d="M33,148.7 H37.4" stroke="#b4b4b4" stroke-width=".7" stroke-dasharray="1 1"/>
<rect x="27.3" y="146.0" width="5.4" height="5.4" fill="#fff" stroke="#8a8a8a" stroke-width=".7"/><path d="M28.6,148.7 h2.8 M30,147.3 v2.8" stroke="#333" stroke-width=".8"/>
<rect x="38.2" y="145.1" width="6.8" height="7" fill="#fff" stroke="#30304a" stroke-width=".8" stroke-dasharray="1.7 1"/><path d="M39,147.5 h5.4 M41,147.5 v4" stroke="#8c98cc" stroke-width=".8"/><g fill="#1a1a2a"><rect x="37.7" y="144.6" width="1.3" height="1.3"/><rect x="44.2" y="144.6" width="1.3" height="1.3"/><rect x="37.7" y="151.3" width="1.3" height="1.3"/><rect x="44.2" y="151.3" width="1.3" height="1.3"/></g>
<path d="M33,158.4 H37.4" stroke="#b4b4b4" stroke-width=".7" stroke-dasharray="1 1"/>
<rect x="27.3" y="155.7" width="5.4" height="5.4" fill="#fff" stroke="#8a8a8a" stroke-width=".7"/><path d="M28.6,158.4 h2.8 M30,157.0 v2.8" stroke="#333" stroke-width=".8"/>
<rect x="38.2" y="154.8" width="6.8" height="7" fill="#fff" stroke="#30304a" stroke-width=".8" stroke-dasharray="1.7 1"/><path d="M39,157.2 h5.4 M41,157.2 v4" stroke="#8c98cc" stroke-width=".8"/><g fill="#1a1a2a"><rect x="37.7" y="154.3" width="1.3" height="1.3"/><rect x="44.2" y="154.3" width="1.3" height="1.3"/><rect x="37.7" y="161.0" width="1.3" height="1.3"/><rect x="44.2" y="161.0" width="1.3" height="1.3"/></g>
<path d="M33,168.2 H37.4" stroke="#b4b4b4" stroke-width=".7" stroke-dasharray="1 1"/>
<rect x="27.3" y="165.5" width="5.4" height="5.4" fill="#fff" stroke="#8a8a8a" stroke-width=".7"/><path d="M28.6,168.2 h2.8 M30,166.8 v2.8" stroke="#333" stroke-width=".8"/>
<rect x="38.2" y="164.6" width="6.8" height="7" fill="#fff" stroke="#30304a" stroke-width=".8" stroke-dasharray="1.7 1"/><path d="M39,167.0 h5.4 M41,167.0 v4" stroke="#8c98cc" stroke-width=".8"/><g fill="#1a1a2a"><rect x="37.7" y="164.1" width="1.3" height="1.3"/><rect x="44.2" y="164.1" width="1.3" height="1.3"/><rect x="37.7" y="170.8" width="1.3" height="1.3"/><rect x="44.2" y="170.8" width="1.3" height="1.3"/></g>
<path d="M33,178.0 H37.4" stroke="#b4b4b4" stroke-width=".7" stroke-dasharray="1 1"/>
<rect x="27.3" y="175.3" width="5.4" height="5.4" fill="#fff" stroke="#8a8a8a" stroke-width=".7"/><path d="M28.6,178.0 h2.8 M30,176.6 v2.8" stroke="#333" stroke-width=".8"/>
<rect x="38.2" y="174.4" width="6.8" height="7" fill="#fff" stroke="#30304a" stroke-width=".8" stroke-dasharray="1.7 1"/><path d="M39,176.8 h5.4 M41,176.8 v4" stroke="#8c98cc" stroke-width=".8"/><g fill="#1a1a2a"><rect x="37.7" y="173.9" width="1.3" height="1.3"/><rect x="44.2" y="173.9" width="1.3" height="1.3"/><rect x="37.7" y="180.6" width="1.3" height="1.3"/><rect x="44.2" y="180.6" width="1.3" height="1.3"/></g>
<path d="M33,187.7 H37.4" stroke="#b4b4b4" stroke-width=".7" stroke-dasharray="1 1"/>
<rect x="27.3" y="185.0" width="5.4" height="5.4" fill="#fff" stroke="#8a8a8a" stroke-width=".7"/><path d="M28.6,187.7 h2.8 M30,186.3 v2.8" stroke="#333" stroke-width=".8"/>
<rect x="38.2" y="184.1" width="6.8" height="7" fill="#fff" stroke="#30304a" stroke-width=".8" stroke-dasharray="1.7 1"/><path d="M39,186.5 h5.4 M41,186.5 v4" stroke="#8c98cc" stroke-width=".8"/><g fill="#1a1a2a"><rect x="37.7" y="183.6" width="1.3" height="1.3"/><rect x="44.2" y="183.6" width="1.3" height="1.3"/><rect x="37.7" y="190.3" width="1.3" height="1.3"/><rect x="44.2" y="190.3" width="1.3" height="1.3"/></g>
<path d="M33,197.5 H37.4" stroke="#b4b4b4" stroke-width=".7" stroke-dasharray="1 1"/>
<rect x="27.3" y="194.8" width="5.4" height="5.4" fill="#fff" stroke="#8a8a8a" stroke-width=".7"/><path d="M28.6,197.5 h2.8 M30,196.1 v2.8" stroke="#333" stroke-width=".8"/>
<rect x="38.2" y="193.9" width="6.8" height="7" fill="#fff" stroke="#30304a" stroke-width=".8" stroke-dasharray="1.7 1"/><path d="M39,196.3 h5.4 M41,196.3 v4" stroke="#8c98cc" stroke-width=".8"/><g fill="#1a1a2a"><rect x="37.7" y="193.4" width="1.3" height="1.3"/><rect x="44.2" y="193.4" width="1.3" height="1.3"/><rect x="37.7" y="200.1" width="1.3" height="1.3"/><rect x="44.2" y="200.1" width="1.3" height="1.3"/></g>
<path d="M33,207.2 H37.4" stroke="#b4b4b4" stroke-width=".7" stroke-dasharray="1 1"/>
<rect x="27.3" y="204.5" width="5.4" height="5.4" fill="#fff" stroke="#8a8a8a" stroke-width=".7"/><path d="M28.6,207.2 h2.8 M30,205.8 v2.8" stroke="#333" stroke-width=".8"/>
<rect x="38.2" y="203.6" width="6.8" height="7" fill="#fff" stroke="#30304a" stroke-width=".8" stroke-dasharray="1.7 1"/><path d="M39,206.0 h5.4 M41,206.0 v4" stroke="#8c98cc" stroke-width=".8"/><g fill="#1a1a2a"><rect x="37.7" y="203.1" width="1.3" height="1.3"/><rect x="44.2" y="203.1" width="1.3" height="1.3"/><rect x="37.7" y="209.8" width="1.3" height="1.3"/><rect x="44.2" y="209.8" width="1.3" height="1.3"/></g>
<path d="M33,217.0 H37.4" stroke="#b4b4b4" stroke-width=".7" stroke-dasharray="1 1"/>
<rect x="27.3" y="214.3" width="5.4" height="5.4" fill="#fff" stroke="#8a8a8a" stroke-width=".7"/><path d="M28.6,217.0 h2.8 M30,215.6 v2.8" stroke="#333" stroke-width=".8"/>
<rect x="38.2" y="213.4" width="6.8" height="7" fill="#fff" stroke="#30304a" stroke-width=".8" stroke-dasharray="1.7 1"/><path d="M39,215.8 h5.4 M41,215.8 v4" stroke="#8c98cc" stroke-width=".8"/><g fill="#1a1a2a"><rect x="37.7" y="212.9" width="1.3" height="1.3"/><rect x="44.2" y="212.9" width="1.3" height="1.3"/><rect x="37.7" y="219.6" width="1.3" height="1.3"/><rect x="44.2" y="219.6" width="1.3" height="1.3"/></g>
<rect x="96" y="64" width="10" height="161.5" fill="#eef1fa"/>
<rect x="96.5" y="66" width="9" height="9.6" rx="1" fill="#cfdcf6" stroke="#9fb0d8" stroke-width=".6"/><path d="M98.7,72.3 l2.3,-2.6 l2.3,2.6" stroke="#2b3f78" stroke-width="1.2" fill="none"/>
<rect x="96.5" y="95.5" width="9" height="118" rx="1.2" fill="url(#gThumbV)" stroke="#a9b8de" stroke-width=".6"/><path d="M99,148.5 h4 M99,150 h4 M99,151.5 h4" stroke="#9aa9d0" stroke-width=".6"/>
<rect x="96.5" y="215.6" width="9" height="9.4" rx="1" fill="#cfdcf6" stroke="#9fb0d8" stroke-width=".6"/><path d="M98.7,219 l2.3,2.6 l2.3,-2.6" stroke="#2b3f78" stroke-width="1.2" fill="none"/>
<rect x="1" y="225.5" width="95" height="10" fill="#eef1fa"/>
<rect x="2" y="226" width="9.4" height="9" rx="1" fill="#cfdcf6" stroke="#9fb0d8" stroke-width=".6"/><path d="M8,228.2 l-2.6,2.3 l2.6,2.3" stroke="#2b3f78" stroke-width="1.2" fill="none"/>
<rect x="12.5" y="226" width="66.5" height="9" rx="1.2" fill="url(#gThumbH)" stroke="#a9b8de" stroke-width=".6"/><path d="M44.5,228.5 v4 M46,228.5 v4 M47.5,228.5 v4" stroke="#9aa9d0" stroke-width=".6"/>
<rect x="86.4" y="226" width="9.4" height="9" rx="1" fill="#cfdcf6" stroke="#9fb0d8" stroke-width=".6"/><path d="M89.8,228.2 l2.6,2.3 l-2.6,2.3" stroke="#2b3f78" stroke-width="1.2" fill="none"/>
<rect x="97.6" y="54.4" width="7.2" height="7.2" fill="#7f8ecc" stroke="#cfd6f2" stroke-width=".8"/><path d="M99,55.8 l4.4,4.4 M103.4,55.8 l-4.4,4.4" stroke="#e4e9fa" stroke-width=".9"/>
<text x="4.6" y="249.3" font-family="Liberation Sans,sans-serif" font-size="12.5" font-weight="bold" fill="#111">Σ</text><path d="M5,249.6 h8" stroke="#d8c020" stroke-width="1"/>
<rect x="16.2" y="237.2" width="14" height="14" rx="1.4" fill="#aee6a6" stroke="#6fb36a" stroke-width=".8"/><path d="M20,240 v8.5 h3.5 M20,243.5 h3 M24.5,243.5 h3 m-1.2,-1.2 l1.2,1.2 l-1.2,1.2" stroke="#1d4d1d" stroke-width=".9" fill="none" stroke-dasharray="1.2 .6"/>
<g fill="#111"><rect x="34.2" y="243" width="3.8" height="5.6" rx="1"/><rect x="39.8" y="243" width="3.8" height="5.6" rx="1"/><rect x="35.2" y="240.3" width="2.4" height="3.4"/><rect x="40.2" y="240.3" width="2.4" height="3.4"/><rect x="37.6" y="243.4" width="2.6" height="2"/></g>
<path d="M50,247 C53,245 56,242 58,239" stroke="#2a4fb8" stroke-width="1.8" fill="none"/><path d="M57.5,248 h-5.5 m1.8,-1.6 l-1.8,1.6 l1.8,1.6" stroke="#111" stroke-width=".9" fill="none"/>
<rect x="0" y="252.6" width="106" height="1" fill="#eef1fb"/><rect x="0" y="254.2" width="106" height="1.2" fill="#b9c2e6"/>
<rect x="0" y="255.6" width="106" height="10.6" fill="#dfe4f6"/><rect x="0" y="266.2" width="106" height=".8" fill="#aab4dc"/>
<rect x="97" y="257.4" width="7.4" height="7.4" fill="#e6e9f4" stroke="#b9bfd6" stroke-width=".8"/><path d="M98.4,258.8 l4.6,4.6 M103,258.8 l-4.6,4.6" stroke="#c2c7da" stroke-width=".9"/>
<rect x="0" y="267" width="106" height="316" fill="url(#gStripL)"/>
<rect x="14" y="267.4" width="76.4" height="314.4" fill="#fff" stroke="#8e97b8" stroke-width=".8"/>
<rect x="80.2" y="268" width="9.8" height="313.4" fill="#eef1fa"/>
<rect x="80.7" y="268.6" width="8.8" height="10" rx="1" fill="#cfdcf6" stroke="#9fb0d8" stroke-width=".6"/><path d="M82.8,275 l2.3,-2.6 l2.3,2.6" stroke="#2b3f78" stroke-width="1.2" fill="none"/>
<rect x="80.7" y="280" width="8.8" height="287.5" rx="1.2" fill="url(#gThumbV2)" stroke="#a9b8de" stroke-width=".6"/><path d="M83,422 h4 M83,423.5 h4 M83,425 h4" stroke="#9aa9d0" stroke-width=".6"/>
<rect x="80.7" y="570.6" width="8.8" height="10" rx="1" fill="#cfdcf6" stroke="#9fb0d8" stroke-width=".6"/><path d="M82.8,574.2 l2.3,2.6 l2.3,-2.6" stroke="#2b3f78" stroke-width="1.2" fill="none"/>
<path d="M32.5,276.5 q0,-2 2,-2 h9 q1.5,0 2.5,1.5 l1,1.5 h14.5 q2,0 2,2 v26 q0,2 -2,2 h-27 q-2,0 -2,-2z" fill="url(#gFold)" stroke="#e8c860" stroke-width=".6"/>
<path d="M32.5,342.5 q0,-2 2,-2 h9 q1.5,0 2.5,1.5 l1,1.5 h14.5 q2,0 2,2 v26 q0,2 -2,2 h-27 q-2,0 -2,-2z" fill="url(#gFold)" stroke="#e8c860" stroke-width=".6"/>
<path d="M32.5,407.5 q0,-2 2,-2 h9 q1.5,0 2.5,1.5 l1,1.5 h14.5 q2,0 2,2 v26 q0,2 -2,2 h-27 q-2,0 -2,-2z" fill="url(#gFold)" stroke="#e8c860" stroke-width=".6"/>
<g stroke="#666" stroke-width=".8" fill="none"><path d="M40.5,469.5 L58.5,476.5 V497 M40.5,469.5 V494 M52,474 V496"/></g><rect x="38.8" y="492" width="2.6" height="11" fill="#555"/><rect x="57" y="490.5" width="2.8" height="7.5" fill="#666"/><path d="M52,474 V496" stroke="#999" stroke-width="1.2"/>
<path d="M29,497.7 h3.4 l1,1.2 h5 v5.6 h-9.4z" fill="#f3e05a" stroke="#8a7a20" stroke-width=".6"/>
<path d="M38,542 q10,3.5 20,-1.5" stroke="#666" stroke-width="1.3" fill="none"/><path d="M37.5,552.5 L59,546.5" stroke="#aab" stroke-width="1.6"/><path d="M40,560 L59,554.5" stroke="#888" stroke-width="1.4"/>
<path d="M29,563.8000000000001 h3.4 l1,1.2 h5 v5.6 h-9.4z" fill="#f3e05a" stroke="#8a7a20" stroke-width=".6"/>
<g transform="translate(2,268.5)"><path d="M0.5,2 h3.5 l1,1.2 h5 v6 h-9.5z" fill="#cfd3dc" stroke="#a4a9b8" stroke-width=".7"/></g>
<g transform="translate(2,283.0)"><path d="M2,1 v7.5 h3 M2,4.5 h3 M6.5,4.5 h3 M6.5,8.5 h3" stroke="#222" stroke-width=".9" fill="none" stroke-dasharray="1.2 .6"/></g>
<g transform="translate(2,295.7)"><rect x=".5" y="1" width="9.5" height="8.5" fill="#fff" stroke="#2c3f8c" stroke-width=".9"/><rect x=".8" y="1.2" width="9" height="2" fill="#2c3f8c"/><path d="M2.2,5 h6.4 M2.2,7.2 h6.4" stroke="#5c70c0" stroke-width="1" stroke-dasharray="1.4 .8"/></g>
<g transform="translate(2,309.0)"><path d="M.8,2 h1.8 M4,2 h6 M.8,5 h1.8 M4,5 h6 M.8,8 h1.8 M4,8 h6" stroke="#2c3f8c" stroke-width="1.2" stroke-dasharray="1.4 .6"/></g>
<g transform="translate(2,336.6)"><path d="M5,0 v6 M2.2,3.4 l2.8,3 l2.8,-3" stroke="#1f2f9a" stroke-width="1.5" fill="none"/><path d="M.5,7.5 l4.5,2.5 l4.5,-2.5 l-4.5,-2z" fill="#6f86d8" stroke="#1f2f9a" stroke-width=".6"/></g>
<g transform="translate(2,349.4)"><rect x="1" y="1" width="5" height="5" fill="#b9bcc6"/><rect x="4" y="4" width="5.5" height="5.5" fill="#a3a7b4"/></g>
<g transform="translate(2,362.8)"><path d="M1.2,4.2 a3.8,3.8 0 0 1 7,-1.2 M8.8,5.8 a3.8,3.8 0 0 1 -7,1.2" stroke="#1a35c8" stroke-width="1.7" fill="none"/><path d="M9.6,.6 v3.2 h-3.2z M.4,9.4 v-3.2 h3.2z" fill="#1a35c8"/></g>
<g transform="translate(2,376.5)"><path d="M.5,3 h3.5 l1,1.2 h4.6 v5.4 h-9.1z" fill="#f4e04a" stroke="#6b6420" stroke-width=".7"/><path d="M9,.2 v3.6 M7.2,2 h3.6 M7.7,.7 l2.6,2.6 M10.3,.7 l-2.6,2.6" stroke="#444" stroke-width=".5"/></g>
<g transform="translate(2,390.0)"><rect x="1" y="1" width="5" height="5" fill="#c2c5cf"/><rect x="4" y="4" width="5.5" height="5.5" fill="#b0b4c0"/></g>
<g transform="translate(2,402.7)"><rect x="1" y="1" width="5.5" height="5.5" fill="none" stroke="#b4b8c6" stroke-width=".9"/><rect x="4" y="4" width="5.5" height="5.5" fill="#d0d3dd" stroke="#b4b8c6" stroke-width=".9"/></g>
<g transform="translate(2,416.0)"><rect x="1" y="1" width="5.5" height="5.5" fill="none" stroke="#b4b8c6" stroke-width=".9"/><rect x="4" y="4" width="5.5" height="5.5" fill="#d0d3dd" stroke="#b4b8c6" stroke-width=".9"/></g>
<g transform="translate(2,429.5)"><path d="M1,1 l8,8 M9,1 l-8,8" stroke="#d21f1f" stroke-width="1.9"/></g>
<g transform="translate(2,442.5)"><path d="M1,.5 h4 l-1.5,3 h3 l-4.5,5.5 l1,-4 h-2.5z" fill="#111"/><rect x="5.5" y="6" width="4.5" height="3.8" fill="#3c9be8" stroke="#1f4f90" stroke-width=".5"/></g>
<g transform="translate(92.6,267.5)"><path d="M1,8 C4,6 7,3.5 9.5,.5" stroke="#2a4fb8" stroke-width="1.8" fill="none"/><path d="M9.5,9.2 h-6" stroke="#111" stroke-width="1"/></g>
<g transform="translate(92.6,282.0)"><text x="0" y="5.5" font-family="Liberation Sans,sans-serif" font-size="6.5" font-weight="bold" fill="#111">x</text><path d="M1,8 h8.6 m-2,-1.8 l2,1.8 l-2,1.8 M3,6.2 l-2,1.8 l2,1.8" stroke="#d21f1f" stroke-width="1" fill="none"/></g>
<g transform="translate(92.6,295.5)"><text x="0" y="5.5" font-family="Liberation Sans,sans-serif" font-size="6.5" font-weight="bold" fill="#111">y</text><path d="M3,9.5 l6.5,-6.5 m-2.8,0 h2.8 v2.8 M5.6,9.5 h-2.6 v-2.6" stroke="#d21f1f" stroke-width="1" fill="none"/></g>
<g transform="translate(92.6,309.0)"><text x="0" y="7.5" font-family="Liberation Sans,sans-serif" font-size="7" font-weight="bold" fill="#111">z</text><path d="M7.6,.5 v9 m-1.8,-2 l1.8,2 l1.8,-2 M5.8,2.5 l1.8,-2 l1.8,2" stroke="#d21f1f" stroke-width="1" fill="none"/></g>
<g transform="translate(92.6,323.0)"><path d="M.6,5 h9.4 m-2.2,-2 l2.2,2 l-2.2,2 M2.8,3 l-2.2,2 l2.2,2" stroke="#d21f1f" stroke-width="1.2" fill="none"/><path d="M5.2,1 v8" stroke="#111" stroke-width=".8"/></g>
<g transform="translate(92.6,336.6)"><path d="M2.5,2 h7 l-2,5 h-7z" fill="#d62a2a" stroke="#7a1010" stroke-width=".6"/><path d="M.5,9.2 h7.5" stroke="#111" stroke-width="1"/></g>
<g transform="translate(92.6,349.4)"><rect x="1" y="2.5" width="6.5" height="5.5" fill="#d62a2a" stroke="#7a1010" stroke-width=".6"/><path d="M1,2.5 l2,-1.8 h6.5 l-2,1.8 M9.5,.7 v5.4 l-2,1.9" fill="#a81818" stroke="#7a1010" stroke-width=".5"/></g>
<g transform="translate(92.6,362.8)"><path d="M.8,3.5 l2.5,-2.5 h6.4 l-2.5,2.5z" fill="#d62a2a" stroke="#222" stroke-width=".6"/><path d="M.8,3.5 v4.5 h6.4 v-4.5 M7.2,8 l2.5,-2.5 v-4.5 M.8,5.8 h6.4 l2.5,-2.5" fill="none" stroke="#222" stroke-width=".7"/><text x="8" y="10.4" font-family="Liberation Sans,sans-serif" font-size="3.6" fill="#111">3</text></g>
<g transform="translate(92.6,376.2)"><path d="M.8,3.5 l2.5,-2.5 h6.4 l-2.5,2.5z" fill="#d62a2a" stroke="#222" stroke-width=".6"/><path d="M.8,3.5 v4.5 h6.4 v-4.5 M7.2,8 l2.5,-2.5 v-4.5 M.8,5.8 h6.4 l2.5,-2.5" fill="none" stroke="#222" stroke-width=".7"/><text x="8" y="10.4" font-family="Liberation Sans,sans-serif" font-size="3.6" fill="#111">2</text></g>
<g transform="translate(92.6,389.8)"><path d="M.8,3.5 l2.5,-2.5 h6.4 l-2.5,2.5z" fill="#d62a2a" stroke="#222" stroke-width=".6"/><path d="M.8,3.5 v4.5 h6.4 v-4.5 M7.2,8 l2.5,-2.5 v-4.5 M.8,5.8 h6.4 l2.5,-2.5" fill="none" stroke="#222" stroke-width=".7"/><text x="8" y="10.4" font-family="Liberation Sans,sans-serif" font-size="3.6" fill="#111">1</text></g>
<g transform="translate(92.6,403.0)"><path d="M1.2,2 v7 m-1.2,-1.6 l1.2,1.6 l1.2,-1.6 M0,3.6 l1.2,-1.6 l1.2,1.6" stroke="#111" stroke-width=".7" fill="none"/><path d="M3.6,6.8 l3,-3.4 h4 l-3,3.4z" fill="#fff" stroke="#222" stroke-width=".7"/></g>
<g transform="translate(92.6,416.5)"><rect x=".8" y="1" width="6" height="5" fill="#78c8f0" stroke="#2a6fa0" stroke-width=".6"/><rect x="3.6" y="4" width="6.4" height="5.4" fill="#48a8e8" stroke="#1f4f90" stroke-width=".6"/></g>
<g transform="translate(92.6,429.0)"><text x="0" y="4.6" font-family="Liberation Sans,sans-serif" font-size="4.6" font-weight="bold" fill="#111">o</text><path d="M3,3 h6.6 m-1.8,-1.6 l1.8,1.6 l-1.8,1.6" stroke="#d21f1f" stroke-width="1.1" fill="none"/><text x="0" y="10" font-family="Liberation Sans,sans-serif" font-size="4.6" font-weight="bold" fill="#111">oo-</text></g>
<g transform="translate(92.6,443.0)"><rect x="1.2" y="2" width="8" height="7" fill="none" stroke="#2c3f9a" stroke-width="1"/><rect x="3.4" y="4" width="3.6" height="3" fill="#b9c6f2" stroke="#2c3f9a" stroke-width=".5"/><path d="M6,2 l3,-1.6" stroke="#2c3f9a" stroke-width=".8"/></g>
<g transform="translate(92.6,456.5)"><path d="M.8,1 h9 M.8,9.2 h9" stroke="#111" stroke-width="1"/><path d="M5.2,1.6 v5.6 m-2,-2 l2,2.2 l2,-2.2" stroke="#d21f1f" stroke-width="1.4" fill="none"/></g>
<g transform="translate(92.6,470.6)"><rect x="2" y="4.4" width="4.6" height="5" fill="#fff" stroke="#111" stroke-width=".8"/><path d="M4.3,4 v-3.6 m-1.6,1.8 l1.6,-1.8 l1.6,1.8 M6.8,7 h3.4 m-1.6,-1.6 l1.6,1.6 l-1.6,1.6" stroke="#d21f1f" stroke-width="1.1" fill="none"/></g>
<g transform="translate(92.6,483.5)"><rect x=".8" y=".4" width="9.4" height="9.8" fill="#d9d9de" stroke="#222" stroke-width=".9"/><rect x="3.6" y="1.6" width="3.8" height="7.4" fill="#d62a2a"/><path d="M2.2,5.3 h6.6" stroke="#222" stroke-width=".8"/></g>
<rect x="0" y="583" width="106" height="26.4" fill="#dce1f5"/><rect x="1" y="595.4" width="41.6" height="13.4" rx="1.6" fill="url(#gTab)" stroke="#6fae6c" stroke-width=".9"/>
<rect x="6.2" y="599.4" width="5.6" height="4.8" rx=".8" fill="#f6f0b8" stroke="#7c8a9a" stroke-width=".7"/><path d="M7.4,598.6 h5.4 v4.6" stroke="#7c8a9a" stroke-width=".7" fill="none"/>
<rect x="48.2" y="598.6" width="8.4" height="6.6" fill="#173a9a"/><rect x="49" y="599.3" width="6.8" height="3" fill="#7fe0e8"/><rect x="49" y="602.2" width="6.8" height="1" fill="#e8f8ff"/>
<rect x="2" y="611" width="103.5" height="9.6" fill="url(#gBlueBox)"/>
<rect x="0" y="621" width="1024" height="6" fill="url(#gTask)"/>
<circle cx="18" cy="632.4" r="11" fill="#2a2d33" stroke="#cfd2d8" stroke-width=".8"/><circle cx="19" cy="631" r="5" fill="#d8602a"/>
<path d="M150,622 v5" stroke="#4a4d55" stroke-width="1.6"/><path d="M151.4,622 v5" stroke="#c9ccd2" stroke-width=".7"/>
<path d="M226.5,622 v5" stroke="#4a4d55" stroke-width="1.6"/><path d="M227.9,622 v5" stroke="#c9ccd2" stroke-width=".7"/>
<path d="M303.5,622 v5" stroke="#4a4d55" stroke-width="1.6"/><path d="M304.9,622 v5" stroke="#c9ccd2" stroke-width=".7"/>
<path d="M382,622 v5" stroke="#4a4d55" stroke-width="1.6"/><path d="M383.4,622 v5" stroke="#c9ccd2" stroke-width=".7"/>
<path d="M462,622 v5" stroke="#4a4d55" stroke-width="1.6"/><path d="M463.4,622 v5" stroke="#c9ccd2" stroke-width=".7"/>
<path d="M541,622 v5" stroke="#4a4d55" stroke-width="1.6"/><path d="M542.4,622 v5" stroke="#c9ccd2" stroke-width=".7"/>
<path d="M620,622 v5" stroke="#4a4d55" stroke-width="1.6"/><path d="M621.4,622 v5" stroke="#c9ccd2" stroke-width=".7"/>
<rect x="702" y="622.2" width="76" height="6" rx="1.5" fill="#2c2e33" stroke="#17181b" stroke-width=".8"/>
<rect x="0" y="620.6" width="1024" height=".9" fill="#5a5d66"/></svg>
<div class="t" style="left:2px;top:256px;color:#333;font-size:7.2px;">Katalog</div>
<div class="t" style="left:16px;width:66px;text-align:center;top:311.0px;font-size:6.8500000000000005px;">Dveře posuvné (4)</div>
<div class="t" style="left:16px;width:66px;text-align:center;top:377.0px;font-size:6.95px;">Skříně (5)</div>
<div class="t" style="left:16px;width:66px;text-align:center;top:442.0px;font-size:6.95px;">Zásuvky (12)</div>
<div class="t" style="left:15px;width:66px;text-align:center;top:507px;font-size:6.8px;">do (60)</div>
<div class="t" style="left:15px;width:66px;text-align:center;top:572.4px;font-size:6.8px;">ut (46)</div>
<div class="t" style="left:2px;top:584px;font-size:6.9px;color:#222;">Objekty</div>
<div class="t" style="left:17px;top:597.2px;font-size:6.9px;color:#1d4d22;">Objekty</div>
<div class="t" style="left:60px;top:597.2px;font-size:6.9px;color:#5767a8;">Textury</div>
<!-- /LEFT -->
<!-- ICONS -->
<svg id="topicons" width="1024" height="52" viewBox="0 0 1024 52"><rect x="0" y="0" width="9.5" height="9.5" fill="#3fb861"/><path d="M2,8 L4.5,2 L6,5 L8,1.5" stroke="#d8ffe0" stroke-width="1.2" fill="none"/>
<path d="M977,0 C970,1 968,9.6 958,9.6 L1024,9.6 L1024,0Z" fill="#d3daf3"/>
<rect x="0" y="9.6" width="1024" height="0.8" fill="#8c98d2"/>
<path d="M987,7.2 h4" stroke="#5c6cae" stroke-width="1.4"/>
<path d="M1002.5,3.2 h4.2 v3.6 h-4.2z M1004,3 v-1.2 h4.2 v3.6 h-1.3" stroke="#6f7fc0" stroke-width="0.9" fill="none"/>
<path d="M1016.6,1.4 l5.6,6 M1022.2,1.4 l-5.6,6" stroke="#5a6ab0" stroke-width="1.3"/>
<g><path d="M4,33 l8,-2.5 h8 v9 l-8,4.5 h-8z" fill="#7f8aa0"/><rect x="10" y="30.5" width="9" height="9" fill="#4f9bd8" stroke="#2b6cb0" stroke-width=".6"/><rect x="4" y="31.5" width="7" height="6" fill="#e8f0fa" stroke="#58657c" stroke-width=".7"/><path d="M4.5,41 l7,-1.5 h6 l-5,4 h-8z" fill="#b8c0cc" stroke="#6a7488" stroke-width=".5"/></g>
<g><ellipse cx="35" cy="40.5" rx="6.4" ry="3.2" fill="#8a8fa0"/><ellipse cx="34.5" cy="38.5" rx="6" ry="3.6" fill="#f4f4f6" stroke="#9a9aa6" stroke-width=".6"/><path d="M31,36 l1,-4.5 h5 l1.5,4.5z" fill="#f5e9a8" stroke="#c0b070" stroke-width=".5"/><rect x="33" y="38.3" width="5" height="1.6" fill="#555"/></g>
<g><rect x="53.2" y="31.4" width="11" height="12" fill="#6f7694" opacity=".7"/><rect x="52.5" y="30" width="10.5" height="12.5" fill="#5a9be6" stroke="#a8c8f4" stroke-width=".9"/><path d="M57,30 v12 M57,36 h6" stroke="#e6f0ff" stroke-width=".9"/><rect x="58.5" y="37.5" width="3" height="1.6" fill="#fff"/></g>
<rect x="74.7" y="31.9" width="15" height="12" fill="#6f7694" opacity=".75"/><rect x="73.5" y="30.5" width="15" height="12" fill="#1f5fd0" stroke="#9fc3f4" stroke-width="0.9"/><rect x="74.0" y="30.9" width="14" height="2" fill="#0f3fa8"/><path d="M77,34 l8,6.5" stroke="#cfe0ff" stroke-width="1.3"/><circle cx="85" cy="40" r="1.4" fill="#fff"/><rect x="74.5" y="34" width="2.6" height="7.5" fill="#7fb0f4"/>
<rect x="97.7" y="31.9" width="15" height="12" fill="#6f7694" opacity=".75"/><rect x="96.5" y="30.5" width="15" height="12" fill="#1f5fd0" stroke="#9fc3f4" stroke-width="0.9"/><rect x="97.0" y="30.9" width="14" height="2" fill="#0f3fa8"/><rect x="99.5" y="33.5" width="4.5" height="3.8" fill="#66b2f8"/><rect x="99" y="39" width="10" height="1.6" fill="#a9ccf8"/>
<rect x="120.7" y="31.9" width="15" height="12" fill="#6f7694" opacity=".75"/><rect x="119.5" y="30.5" width="15" height="12" fill="#1f5fd0" stroke="#9fc3f4" stroke-width="0.9"/><rect x="120.0" y="30.9" width="14" height="2" fill="#0f3fa8"/><rect x="121.5" y="36.5" width="3.6" height="3.6" fill="#6ab4fa"/><rect x="127.5" y="36.5" width="3.6" height="3.6" fill="#fff"/>
<rect x="143.7" y="31.9" width="15" height="12" fill="#6f7694" opacity=".75"/><rect x="142.5" y="30.5" width="15" height="12" fill="#1f5fd0" stroke="#9fc3f4" stroke-width="0.9"/><rect x="143.0" y="30.9" width="14" height="2" fill="#0f3fa8"/><rect x="146" y="33" width="1.6" height="8" fill="#9fcaff"/><rect x="150.5" y="34.5" width="5" height="5.5" fill="#5aa4f4" stroke="#cfe2ff" stroke-width=".6"/>
<rect x="166.7" y="31.9" width="15" height="12" fill="#6f7694" opacity=".75"/><rect x="165.5" y="30.5" width="15" height="12" fill="#1f5fd0" stroke="#9fc3f4" stroke-width="0.9"/><rect x="166.0" y="30.9" width="14" height="2" fill="#0f3fa8"/><path d="M168,41 l3,-6.5 h7 l-3,6.5z" fill="#54a6f6" stroke="#cfe2ff" stroke-width=".6"/>
<rect x="189.7" y="31.9" width="15" height="12" fill="#6f7694" opacity=".75"/><rect x="188.5" y="30.5" width="15" height="12" fill="#1f5fd0" stroke="#9fc3f4" stroke-width="0.9"/><rect x="189.0" y="30.9" width="14" height="2" fill="#0f3fa8"/><path d="M190.5,41 l4,-7 h7.5 l-4,7z" fill="#54a6f6" stroke="#cfe2ff" stroke-width=".6"/><path d="M192.5,38 h8" stroke="#cfe2ff" stroke-width=".6"/>
<rect x="212.7" y="31.9" width="15" height="12" fill="#6f7694" opacity=".75"/><rect x="211.5" y="30.5" width="15" height="12" fill="#1f5fd0" stroke="#9fc3f4" stroke-width="0.9"/><rect x="212.0" y="30.9" width="14" height="2" fill="#0f3fa8"/><rect x="216" y="34" width="6.5" height="7.5" fill="#54a6f6" stroke="#cfe2ff" stroke-width=".6"/>
<rect x="235.7" y="31.9" width="15" height="12" fill="#6f7694" opacity=".75"/><rect x="234.5" y="30.5" width="15" height="12" fill="#1f5fd0" stroke="#9fc3f4" stroke-width="0.9"/><rect x="235.0" y="30.9" width="14" height="2" fill="#0f3fa8"/><rect x="236.5" y="34" width="11" height="7" fill="#4a96ee" stroke="#cfe2ff" stroke-width=".5"/><path d="M242,34 v7 M236.5,37.5 h11" stroke="#cfe2ff" stroke-width=".6"/>
<rect x="258.7" y="31.9" width="15" height="12" fill="#6f7694" opacity=".75"/><rect x="257.5" y="30.5" width="15" height="12" fill="#1f5fd0" stroke="#9fc3f4" stroke-width="0.9"/><rect x="258.0" y="30.9" width="14" height="2" fill="#0f3fa8"/><rect x="259.5" y="34" width="11" height="7" fill="#3f86e0" stroke="#cfe2ff" stroke-width=".5"/><path d="M262,35.5 v4 M264.5,35.5 v4 M267,35.5 v4" stroke="#cfe2ff" stroke-width=".9"/>
<rect x="278.5" y="27" width="22" height="21.5" fill="#c6c8d0" stroke="#aeb2c2" stroke-width=".6"/>
<rect x="283" y="30.5" width="14" height="12.5" fill="#fff" stroke="#2b4fa8" stroke-width=".9"/><rect x="283.4" y="30.8" width="13.2" height="2" fill="#2b4fa8"/><path d="M285,42 C288,38 291,36 294.5,31" stroke="#e3c43c" stroke-width="1.6" fill="none"/><path d="M286,42 C289,38.5 292,36 295.5,31.5" stroke="#2d58c8" stroke-width="1.1" fill="none"/><path d="M296,39.5 h-5 m2,-2 l-2,2 l2,2" stroke="#2038a0" stroke-width="1.1" fill="none"/>
<g><path d="M308.5,31.5 h10 v9 h-5 l-3.5,3 v-3 h-1.5z" fill="#8d9bc2" transform="translate(1.2,1.2)"/><path d="M307.5,30.5 h10 v9 h-5 l-3.5,3 v-3 h-1.5z" fill="#3fa0e6" stroke="#c5e2fb" stroke-width=".8"/><text x="310.3" y="38.3" font-family="Liberation Sans,sans-serif" font-weight="bold" font-size="8" fill="#fff">?</text></g>
<rect x="886" y="13.5" width="138" height="35.5" fill="#fff"/>
<text x="888.5" y="33.8" font-family="Liberation Sans,sans-serif" font-size="23.5" letter-spacing="-1.9" fill="#111" textLength="57" lengthAdjust="spacingAndGlyphs">SOFT</text>
<path d="M889,38.2 H919.5 L929.6,28.6 L939.5,38.2 H945" stroke="#fff" stroke-width="3" fill="none"/>
<path d="M889,38.2 H919.5 L929.6,28.6 L939.5,38.2 H945" stroke="#222" stroke-width="0.9" fill="none"/>
<path d="M927.5,33.5 q2,4.5 4.5,0 q-1,1.8 -2.2,1.6 q-1.4,0 -2.3,-1.6z" fill="#1d8c46" stroke="#1d8c46" stroke-width="1"/>
<text x="889" y="45.2" font-family="Liberation Sans,sans-serif" font-weight="bold" font-size="7.4" fill="#111" textLength="56" lengthAdjust="spacing">consult</text>
<rect x="949" y="15" width="1.2" height="31.5" fill="#2a9a52"/>
<text x="975" y="21.4" font-family="Liberation Sans,sans-serif" font-weight="bold" font-size="6.2" fill="#222" textLength="45" lengthAdjust="spacing">aec creative</text>
<path d="M955.4,23.6 H960 L966,17.2 L972,23.6 H1020.5" stroke="#333" stroke-width="0.8" fill="none"/>
<text x="955" y="34.8" font-family="Liberation Sans,sans-serif" font-weight="bold" font-size="11" fill="#1fa355" textLength="65" lengthAdjust="spacing">CABINET</text>
<path d="M955.4,38.6 H1004 L1010,45 L1016,38.6 H1020.5" stroke="#333" stroke-width="0.8" fill="none"/>
<text x="955" y="45.3" font-family="Liberation Sans,sans-serif" font-weight="bold" font-size="6" fill="#111" textLength="48" lengthAdjust="spacingAndGlyphs">makro pro ArCon</text>
<text x="1015.2" y="45.6" font-family="Liberation Sans,sans-serif" font-size="5.5" fill="#222">®</text></svg>
<!-- /ICONS -->
<div id="status" class="a"><span class="t" style="left:4.5px;top:2px;font-size:7.2px;">ArCon 9 Profesionál ® Vizuální architektura, Copyright © 2004 Eleco Software GmbH</span></div>
<svg id="cursor" width="1024" height="30" viewBox="0 0 1024 30"><path d="M657.5,5 v10.4 l2.4,-2.2 l1.8,4 l1.6,-.7 l-1.8,-3.9 h3.3z" fill="#fff" stroke="#111" stroke-width=".8" stroke-linejoin="round"/></svg>
</body>
</html>
